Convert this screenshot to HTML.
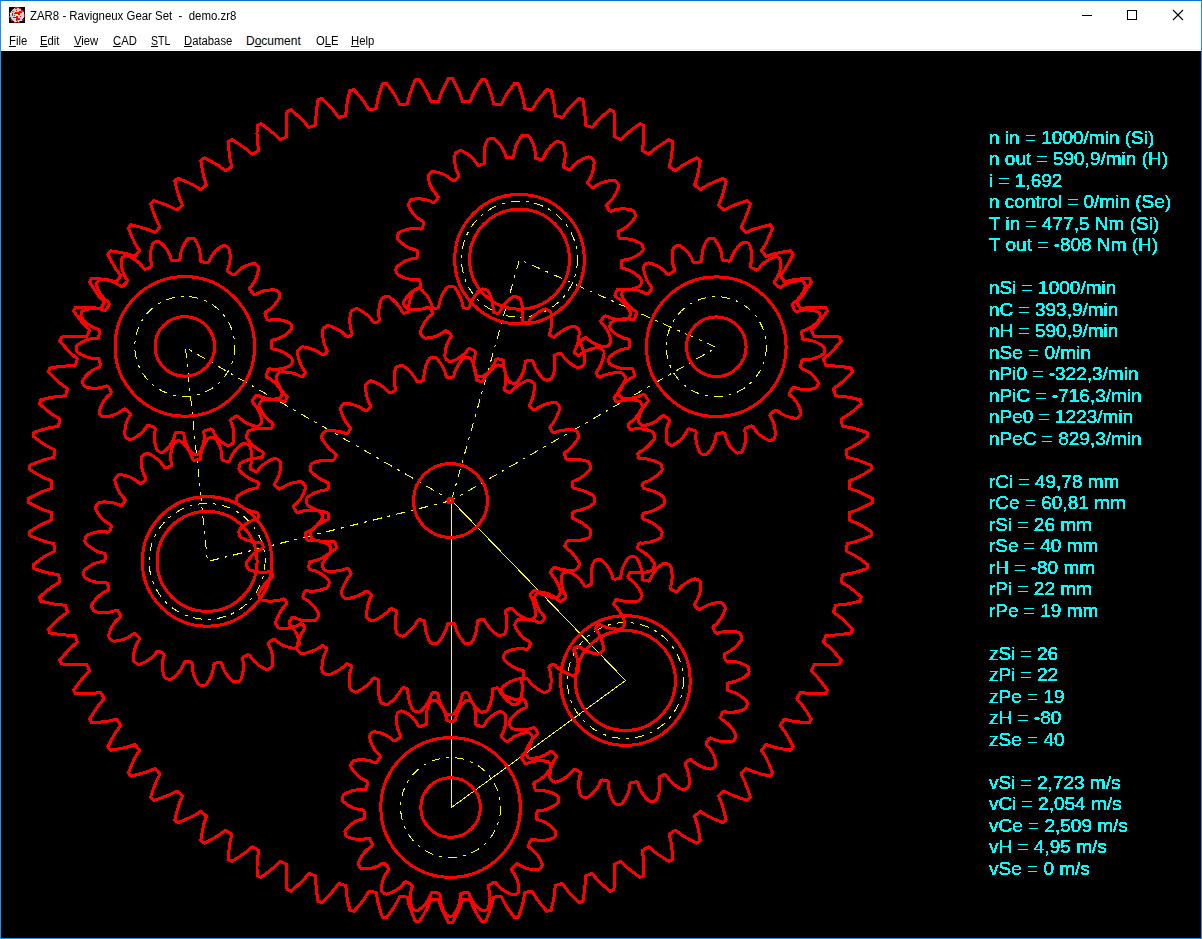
<!DOCTYPE html>
<html><head><meta charset="utf-8">
<style>
html,body{margin:0;padding:0;width:1202px;height:939px;overflow:hidden;background:#fff;}
body{position:relative;font-family:"Liberation Sans",sans-serif;}
#frame{position:absolute;left:0;top:0;width:1200px;height:937px;border:1px solid #1e90ee;border-top-color:#0474d2;}
#title{position:absolute;left:1px;top:1px;width:1200px;height:30px;background:#fff;}
#icon{position:absolute;left:8px;top:6px;width:16px;height:16px;background:#000;}
#ttext{position:absolute;left:29px;top:7px;font-size:12px;color:#000;white-space:pre;line-height:16px;transform:scaleX(0.952);transform-origin:0 0;}
#ctrl{position:absolute;left:0;top:0;}
#menu{position:absolute;left:1px;top:31px;width:1200px;height:18px;background:#fff;}
#menuline{position:absolute;left:1px;top:49px;width:1200px;height:1px;background:#f0f0f0;}
.mi{position:absolute;top:3px;font-size:12px;line-height:14px;color:#000;white-space:pre;transform:scaleX(0.94);transform-origin:0 0;}
.mi u{text-decoration:underline;}
#canvas{position:absolute;left:1px;top:51px;width:1200px;height:887px;background:#000;overflow:hidden;}
#canvas>svg{position:absolute;left:-1px;top:-51px;shape-rendering:crispEdges;}
.g{fill:none;stroke:#f00;stroke-width:3;stroke-linejoin:round;}
.c{fill:none;stroke:#f00;stroke-width:3;}
.y{fill:none;stroke:#ff0;stroke-width:1;}
.dd{stroke-dasharray:9 6 3 6;}
.dl{stroke-dasharray:7 4;}
#txt{position:absolute;left:0;top:0;width:1200px;height:887px;filter:url(#crisp);}
.t{position:absolute;left:988px;font-size:19px;line-height:22px;color:#0ff;white-space:pre;-webkit-text-stroke:0.12px #0ff;}
</style></head><body>
<svg width="0" height="0" style="position:absolute"><filter id="crisp" x="0" y="0" width="100%" height="100%"><feComponentTransfer><feFuncA type="discrete" tableValues="0 1 1"/></feComponentTransfer></filter></svg>
<div id="frame"></div>
<div id="title">
  <div id="icon"><svg width="16" height="16" style="position:absolute;left:0;top:0" shape-rendering="crispEdges">
<rect width="16" height="16" fill="#000"/>
<circle cx="8" cy="8.2" r="7.3" fill="#c4d8d8"/>
<circle cx="8" cy="8.2" r="7.3" fill="none" stroke="#f00" stroke-width="1.2" stroke-dasharray="2 2"/>
<path fill="#f00" d="M8 0h2v1H8zM12 3h2v2h-2zM10 4h3v2h-3zM9 5h2v3H9zM8 5h1v3H8zM6 5h2v2H6zM3 6h1v3H3zM5 8h1v1H5zM7 9h2v5H7zM5 10h2v1H5zM11 9h1v1h-1zM4 10h1v1H4zM9 12h2v1H9zM3 4h2v1H3zM7 3h1v1H7z"/>
<rect x="7" y="7" width="2" height="2" fill="#ff0"/>
<rect x="9" y="6" width="1" height="1" fill="#00f"/>
<rect x="3" y="4" width="2" height="1" fill="#0c0"/>
<rect x="12" y="4" width="2" height="1" fill="#0c0"/>
<rect x="8" y="13" width="1" height="2" fill="#0c0"/>
<rect x="9" y="11" width="2" height="1" fill="#f0f"/>
<rect x="5" y="6" width="1" height="1" fill="#808"/>
<rect x="1" y="6" width="1" height="1" fill="#fff"/>
</svg></div>
  <div id="ttext">ZAR8 - Ravigneux Gear Set  -  demo.zr8</div>
</div>
<svg id="ctrl" width="1202" height="31"><path d="M1082 15.5H1092" stroke="#000" stroke-width="1"/><rect x="1127.5" y="10.5" width="9" height="9" fill="none" stroke="#000" stroke-width="1"/><path d="M1173 10L1183 20M1183 10L1173 20" stroke="#000" stroke-width="1.1"/></svg>
<div id="menu">
  <div class="mi" style="left:8px"><u>F</u>ile</div>
  <div class="mi" style="left:39px"><u>E</u>dit</div>
  <div class="mi" style="left:73px"><u>V</u>iew</div>
  <div class="mi" style="left:112px"><u>C</u>AD</div>
  <div class="mi" style="left:150px;transform:scaleX(0.88)"><u>S</u>TL</div>
  <div class="mi" style="left:183px"><u>D</u>atabase</div>
  <div class="mi" style="left:245px;transform:scaleX(1.0)">D<u>o</u>cument</div>
  <div class="mi" style="left:315px">O<u>L</u>E</div>
  <div class="mi" style="left:350px"><u>H</u>elp</div>
</div>
<div id="menuline"></div>
<div id="canvas">
<svg width="1202" height="939" viewBox="0 0 1202 939">
<circle cx="519.50" cy="259.20" r="58.00" class="y dd"/>
<circle cx="625.40" cy="680.50" r="58.00" class="y dd"/>
<circle cx="207.10" cy="561.40" r="58.00" class="y dd"/>
<circle cx="716.30" cy="346.70" r="50.00" class="y dd"/>
<circle cx="450.60" cy="807.50" r="50.00" class="y dd"/>
<circle cx="184.80" cy="346.40" r="50.00" class="y dd"/>
<path class="y dd" d="M451.5 500.5 L519.5 259.5 L716.5 347.5 Z"/>
<path class="y" d="M451.5 500.5 L625.5 680.5 L451.5 807.5 Z"/>
<path class="y dd" d="M451.5 500.5 L207.5 561.5 L185.5 347.5 Z"/>
<path class="g" d="M849.2 484.8 L849.3 488.5 L857.1 491.0 L864.8 494.5 L872.5 498.4 L872.5 502.6 L864.8 506.5 L857.1 510.0 L849.3 512.5 L849.2 516.2 L849.0 519.9 L856.5 523.0 L864.0 527.0 L871.4 531.6 L871.0 535.7 L863.0 539.0 L855.1 541.8 L847.2 543.7 L846.7 547.4 L846.3 551.1 L853.5 554.7 L860.6 559.3 L867.6 564.5 L867.0 568.6 L858.7 571.3 L850.6 573.5 L842.5 574.7 L841.8 578.3 L841.1 582.0 L848.0 586.2 L854.8 591.3 L861.3 597.0 L860.4 601.0 L851.9 603.1 L843.6 604.6 L835.5 605.2 L834.5 608.8 L833.5 612.4 L840.1 617.1 L846.4 622.8 L852.5 628.9 L851.2 632.9 L842.6 634.3 L834.2 635.1 L826.1 635.1 L824.8 638.6 L823.5 642.1 L829.7 647.3 L835.6 653.5 L841.2 660.1 L839.6 663.9 L830.9 664.6 L822.5 664.8 L814.4 664.2 L812.8 667.5 L811.3 670.9 L817.0 676.6 L822.4 683.2 L827.4 690.2 L825.6 693.9 L816.9 694.0 L808.4 693.5 L800.4 692.2 L798.6 695.5 L796.8 698.7 L802.1 704.8 L806.9 711.8 L811.4 719.2 L809.2 722.8 L800.6 722.1 L792.2 721.0 L784.3 719.1 L782.3 722.2 L780.2 725.2 L785.0 731.8 L789.2 739.1 L793.1 746.9 L790.7 750.2 L782.1 748.9 L773.8 747.1 L766.1 744.6 L763.8 747.5 L761.5 750.4 L765.8 757.3 L769.4 765.0 L772.7 773.0 L770.0 776.1 L761.6 774.1 L753.5 771.7 L746.0 768.6 L743.5 771.3 L741.0 774.0 L744.7 781.3 L747.7 789.2 L750.4 797.4 L747.4 800.4 L739.2 797.7 L731.3 794.7 L724.0 791.0 L721.3 793.5 L718.6 796.0 L721.7 803.5 L724.1 811.6 L726.1 820.0 L723.0 822.7 L715.0 819.4 L707.3 815.8 L700.4 811.5 L697.5 813.8 L694.6 816.1 L697.1 823.8 L698.9 832.1 L700.2 840.7 L696.9 843.1 L689.1 839.2 L681.8 835.0 L675.2 830.2 L672.2 832.3 L669.1 834.3 L671.0 842.2 L672.1 850.6 L672.8 859.2 L669.2 861.4 L661.8 856.9 L654.8 852.1 L648.7 846.8 L645.5 848.6 L642.2 850.4 L643.5 858.4 L644.0 866.9 L643.9 875.6 L640.2 877.4 L633.2 872.4 L626.6 867.0 L620.9 861.3 L617.5 862.8 L614.2 864.4 L614.8 872.5 L614.6 880.9 L613.9 889.6 L610.1 891.2 L603.5 885.6 L597.3 879.7 L592.1 873.5 L588.6 874.8 L585.1 876.1 L585.1 884.2 L584.3 892.6 L582.9 901.2 L578.9 902.5 L572.8 896.4 L567.1 890.1 L562.4 883.5 L558.8 884.5 L555.2 885.5 L554.6 893.6 L553.1 901.9 L551.0 910.4 L547.0 911.3 L541.3 904.8 L536.2 898.0 L532.0 891.1 L528.3 891.8 L524.7 892.5 L523.5 900.6 L521.3 908.7 L518.6 917.0 L514.5 917.6 L509.3 910.6 L504.7 903.5 L501.1 896.3 L497.4 896.7 L493.7 897.2 L491.8 905.1 L489.0 913.0 L485.7 921.0 L481.6 921.4 L477.0 914.0 L473.0 906.5 L469.9 899.0 L466.2 899.2 L462.5 899.3 L460.0 907.1 L456.5 914.8 L452.6 922.5 L448.4 922.5 L444.5 914.8 L441.0 907.1 L438.5 899.3 L434.8 899.2 L431.1 899.0 L428.0 906.5 L424.0 914.0 L419.4 921.4 L415.3 921.0 L412.0 913.0 L409.2 905.1 L407.3 897.2 L403.6 896.7 L399.9 896.3 L396.3 903.5 L391.7 910.6 L386.5 917.6 L382.4 917.0 L379.7 908.7 L377.5 900.6 L376.3 892.5 L372.7 891.8 L369.0 891.1 L364.8 898.0 L359.7 904.8 L354.0 911.3 L350.0 910.4 L347.9 901.9 L346.4 893.6 L345.8 885.5 L342.2 884.5 L338.6 883.5 L333.9 890.1 L328.2 896.4 L322.1 902.5 L318.1 901.2 L316.7 892.6 L315.9 884.2 L315.9 876.1 L312.4 874.8 L308.9 873.5 L303.7 879.7 L297.5 885.6 L290.9 891.2 L287.1 889.6 L286.4 880.9 L286.2 872.5 L286.8 864.4 L283.5 862.8 L280.1 861.3 L274.4 867.0 L267.8 872.4 L260.8 877.4 L257.1 875.6 L257.0 866.9 L257.5 858.4 L258.8 850.4 L255.5 848.6 L252.3 846.8 L246.2 852.1 L239.2 856.9 L231.8 861.4 L228.2 859.2 L228.9 850.6 L230.0 842.2 L231.9 834.3 L228.8 832.3 L225.8 830.2 L219.2 835.0 L211.9 839.2 L204.1 843.1 L200.8 840.7 L202.1 832.1 L203.9 823.8 L206.4 816.1 L203.5 813.8 L200.6 811.5 L193.7 815.8 L186.0 819.4 L178.0 822.7 L174.9 820.0 L176.9 811.6 L179.3 803.5 L182.4 796.0 L179.7 793.5 L177.0 791.0 L169.7 794.7 L161.8 797.7 L153.6 800.4 L150.6 797.4 L153.3 789.2 L156.3 781.3 L160.0 774.0 L157.5 771.3 L155.0 768.6 L147.5 771.7 L139.4 774.1 L131.0 776.1 L128.3 773.0 L131.6 765.0 L135.2 757.3 L139.5 750.4 L137.2 747.5 L134.9 744.6 L127.2 747.1 L118.9 748.9 L110.3 750.2 L107.9 746.9 L111.8 739.1 L116.0 731.8 L120.8 725.2 L118.7 722.2 L116.7 719.1 L108.8 721.0 L100.4 722.1 L91.8 722.8 L89.6 719.2 L94.1 711.8 L98.9 704.8 L104.2 698.7 L102.4 695.5 L100.6 692.2 L92.6 693.5 L84.1 694.0 L75.4 693.9 L73.6 690.2 L78.6 683.2 L84.0 676.6 L89.7 670.9 L88.2 667.5 L86.6 664.2 L78.5 664.8 L70.1 664.6 L61.4 663.9 L59.8 660.1 L65.4 653.5 L71.3 647.3 L77.5 642.1 L76.2 638.6 L74.9 635.1 L66.8 635.1 L58.4 634.3 L49.8 632.9 L48.5 628.9 L54.6 622.8 L60.9 617.1 L67.5 612.4 L66.5 608.8 L65.5 605.2 L57.4 604.6 L49.1 603.1 L40.6 601.0 L39.7 597.0 L46.2 591.3 L53.0 586.2 L59.9 582.0 L59.2 578.3 L58.5 574.7 L50.4 573.5 L42.3 571.3 L34.0 568.6 L33.4 564.5 L40.4 559.3 L47.5 554.7 L54.7 551.1 L54.3 547.4 L53.8 543.7 L45.9 541.8 L38.0 539.0 L30.0 535.7 L29.6 531.6 L37.0 527.0 L44.5 523.0 L52.0 519.9 L51.8 516.2 L51.7 512.5 L43.9 510.0 L36.2 506.5 L28.5 502.6 L28.5 498.4 L36.2 494.5 L43.9 491.0 L51.7 488.5 L51.8 484.8 L52.0 481.1 L44.5 478.0 L37.0 474.0 L29.6 469.4 L30.0 465.3 L38.0 462.0 L45.9 459.2 L53.8 457.3 L54.3 453.6 L54.7 449.9 L47.5 446.3 L40.4 441.7 L33.4 436.5 L34.0 432.4 L42.3 429.7 L50.4 427.5 L58.5 426.3 L59.2 422.7 L59.9 419.0 L53.0 414.8 L46.2 409.7 L39.7 404.0 L40.6 400.0 L49.1 397.9 L57.4 396.4 L65.5 395.8 L66.5 392.2 L67.5 388.6 L60.9 383.9 L54.6 378.2 L48.5 372.1 L49.8 368.1 L58.4 366.7 L66.8 365.9 L74.9 365.9 L76.2 362.4 L77.5 358.9 L71.3 353.7 L65.4 347.5 L59.8 340.9 L61.4 337.1 L70.1 336.4 L78.5 336.2 L86.6 336.8 L88.2 333.5 L89.7 330.1 L84.0 324.4 L78.6 317.8 L73.6 310.8 L75.4 307.1 L84.1 307.0 L92.6 307.5 L100.6 308.8 L102.4 305.5 L104.2 302.3 L98.9 296.2 L94.1 289.2 L89.6 281.8 L91.8 278.2 L100.4 278.9 L108.8 280.0 L116.7 281.9 L118.7 278.8 L120.8 275.8 L116.0 269.2 L111.8 261.9 L107.9 254.1 L110.3 250.8 L118.9 252.1 L127.2 253.9 L134.9 256.4 L137.2 253.5 L139.5 250.6 L135.2 243.7 L131.6 236.0 L128.3 228.0 L131.0 224.9 L139.4 226.9 L147.5 229.3 L155.0 232.4 L157.5 229.7 L160.0 227.0 L156.3 219.7 L153.3 211.8 L150.6 203.6 L153.6 200.6 L161.8 203.3 L169.7 206.3 L177.0 210.0 L179.7 207.5 L182.4 205.0 L179.3 197.5 L176.9 189.4 L174.9 181.0 L178.0 178.3 L186.0 181.6 L193.7 185.2 L200.6 189.5 L203.5 187.2 L206.4 184.9 L203.9 177.2 L202.1 168.9 L200.8 160.3 L204.1 157.9 L211.9 161.8 L219.2 166.0 L225.8 170.8 L228.8 168.7 L231.9 166.7 L230.0 158.8 L228.9 150.4 L228.2 141.8 L231.8 139.6 L239.2 144.1 L246.2 148.9 L252.3 154.2 L255.5 152.4 L258.8 150.6 L257.5 142.6 L257.0 134.1 L257.1 125.4 L260.8 123.6 L267.8 128.6 L274.4 134.0 L280.1 139.7 L283.5 138.2 L286.8 136.6 L286.2 128.5 L286.4 120.1 L287.1 111.4 L290.9 109.8 L297.5 115.4 L303.7 121.3 L308.9 127.5 L312.4 126.2 L315.9 124.9 L315.9 116.8 L316.7 108.4 L318.1 99.8 L322.1 98.5 L328.2 104.6 L333.9 110.9 L338.6 117.5 L342.2 116.5 L345.8 115.5 L346.4 107.4 L347.9 99.1 L350.0 90.6 L354.0 89.7 L359.7 96.2 L364.8 103.0 L369.0 109.9 L372.7 109.2 L376.3 108.5 L377.5 100.4 L379.7 92.3 L382.4 84.0 L386.5 83.4 L391.7 90.4 L396.3 97.5 L399.9 104.7 L403.6 104.3 L407.3 103.8 L409.2 95.9 L412.0 88.0 L415.3 80.0 L419.4 79.6 L424.0 87.0 L428.0 94.5 L431.1 102.0 L434.8 101.8 L438.5 101.7 L441.0 93.9 L444.5 86.2 L448.4 78.5 L452.6 78.5 L456.5 86.2 L460.0 93.9 L462.5 101.7 L466.2 101.8 L469.9 102.0 L473.0 94.5 L477.0 87.0 L481.6 79.6 L485.7 80.0 L489.0 88.0 L491.8 95.9 L493.7 103.8 L497.4 104.3 L501.1 104.7 L504.7 97.5 L509.3 90.4 L514.5 83.4 L518.6 84.0 L521.3 92.3 L523.5 100.4 L524.7 108.5 L528.3 109.2 L532.0 109.9 L536.2 103.0 L541.3 96.2 L547.0 89.7 L551.0 90.6 L553.1 99.1 L554.6 107.4 L555.2 115.5 L558.8 116.5 L562.4 117.5 L567.1 110.9 L572.8 104.6 L578.9 98.5 L582.9 99.8 L584.3 108.4 L585.1 116.8 L585.1 124.9 L588.6 126.2 L592.1 127.5 L597.3 121.3 L603.5 115.4 L610.1 109.8 L613.9 111.4 L614.6 120.1 L614.8 128.5 L614.2 136.6 L617.5 138.2 L620.9 139.7 L626.6 134.0 L633.2 128.6 L640.2 123.6 L643.9 125.4 L644.0 134.1 L643.5 142.6 L642.2 150.6 L645.5 152.4 L648.7 154.2 L654.8 148.9 L661.8 144.1 L669.2 139.6 L672.8 141.8 L672.1 150.4 L671.0 158.8 L669.1 166.7 L672.2 168.7 L675.2 170.8 L681.8 166.0 L689.1 161.8 L696.9 157.9 L700.2 160.3 L698.9 168.9 L697.1 177.2 L694.6 184.9 L697.5 187.2 L700.4 189.5 L707.3 185.2 L715.0 181.6 L723.0 178.3 L726.1 181.0 L724.1 189.4 L721.7 197.5 L718.6 205.0 L721.3 207.5 L724.0 210.0 L731.3 206.3 L739.2 203.3 L747.4 200.6 L750.4 203.6 L747.7 211.8 L744.7 219.7 L741.0 227.0 L743.5 229.7 L746.0 232.4 L753.5 229.3 L761.6 226.9 L770.0 224.9 L772.7 228.0 L769.4 236.0 L765.8 243.7 L761.5 250.6 L763.8 253.5 L766.1 256.4 L773.8 253.9 L782.1 252.1 L790.7 250.8 L793.1 254.1 L789.2 261.9 L785.0 269.2 L780.2 275.8 L782.3 278.8 L784.3 281.9 L792.2 280.0 L800.6 278.9 L809.2 278.2 L811.4 281.8 L806.9 289.2 L802.1 296.2 L796.8 302.3 L798.6 305.5 L800.4 308.8 L808.4 307.5 L816.9 307.0 L825.6 307.1 L827.4 310.8 L822.4 317.8 L817.0 324.4 L811.3 330.1 L812.8 333.5 L814.4 336.8 L822.5 336.2 L830.9 336.4 L839.6 337.1 L841.2 340.9 L835.6 347.5 L829.7 353.7 L823.5 358.9 L824.8 362.4 L826.1 365.9 L834.2 365.9 L842.6 366.7 L851.2 368.1 L852.5 372.1 L846.4 378.2 L840.1 383.9 L833.5 388.6 L834.5 392.2 L835.5 395.8 L843.6 396.4 L851.9 397.9 L860.4 400.0 L861.3 404.0 L854.8 409.7 L848.0 414.8 L841.1 419.0 L841.8 422.7 L842.5 426.3 L850.6 427.5 L858.7 429.7 L867.0 432.4 L867.6 436.5 L860.6 441.7 L853.5 446.3 L846.3 449.9 L846.7 453.6 L847.2 457.3 L855.1 459.2 L863.0 462.0 L871.0 465.3 L871.4 469.4 L864.0 474.0 L856.5 478.0 L849.0 481.1 Z"/>
<path class="g" d="M642.8 484.2Q642.9 485.7 643.0 487.2Q643.1 488.7 645.3 488.9Q647.4 489.2 649.5 489.8Q651.6 490.4 653.8 491.3Q655.9 492.2 658.1 493.4Q660.2 494.6 662.3 496.1Q664.5 497.5 664.5 499.2Q664.5 500.9 664.5 502.6Q664.5 504.2 662.3 505.7Q660.2 507.1 658.0 508.3Q655.9 509.5 653.8 510.4Q651.6 511.3 649.5 511.9Q647.3 512.5 645.2 512.7Q643.1 513.0 643.0 514.5Q642.9 516.0 642.7 517.5Q642.6 519.0 644.7 519.6Q646.7 520.1 648.7 521.0Q650.8 522.0 652.7 523.2Q654.7 524.5 656.6 526.0Q658.6 527.5 660.4 529.3Q662.3 531.0 662.1 532.7Q661.8 534.3 661.5 536.0Q661.2 537.7 658.9 538.8Q656.6 539.9 654.3 540.7Q652.0 541.5 649.7 542.1Q647.4 542.6 645.2 542.9Q643.0 543.2 640.9 543.0Q638.8 542.9 638.4 544.4Q638.1 545.9 637.7 547.4Q637.4 548.8 639.3 549.7Q641.2 550.6 643.1 551.8Q644.9 553.0 646.7 554.6Q648.4 556.1 650.1 557.9Q651.8 559.7 653.4 561.7Q654.9 563.8 654.4 565.4Q653.9 567.0 653.4 568.6Q652.8 570.2 650.4 570.9Q647.9 571.6 645.5 572.1Q643.1 572.5 640.7 572.7Q638.4 572.9 636.2 572.8Q634.0 572.8 631.9 572.3Q629.8 571.9 629.3 573.3Q628.7 574.7 628.1 576.1Q627.5 577.5 629.3 578.6Q631.1 579.8 632.7 581.3Q634.3 582.8 635.8 584.6Q637.3 586.4 638.7 588.4Q640.0 590.5 641.3 592.7Q642.5 595.0 641.8 596.5Q641.0 598.0 640.2 599.5Q639.5 601.0 636.9 601.3Q634.3 601.6 631.9 601.7Q629.4 601.8 627.1 601.6Q624.8 601.4 622.6 601.0Q620.4 600.6 618.4 599.8Q616.5 599.0 615.7 600.3Q614.9 601.6 614.1 602.9Q613.3 604.2 614.9 605.6Q616.4 607.1 617.8 608.8Q619.2 610.6 620.4 612.6Q621.6 614.6 622.6 616.8Q623.6 619.0 624.5 621.4Q625.4 623.9 624.4 625.2Q623.4 626.6 622.4 627.9Q621.4 629.3 618.8 629.2Q616.3 629.1 613.8 628.8Q611.4 628.5 609.1 628.0Q606.8 627.5 604.8 626.7Q602.7 625.9 600.8 624.9Q599.0 623.8 598.0 624.9Q597.0 626.1 596.0 627.2Q595.0 628.4 596.4 630.0Q597.7 631.7 598.8 633.6Q599.9 635.6 600.7 637.7Q601.6 639.9 602.3 642.3Q603.0 644.6 603.4 647.2Q603.9 649.7 602.7 650.9Q601.6 652.1 600.4 653.3Q599.2 654.4 596.6 654.0Q594.1 653.5 591.7 652.8Q589.4 652.1 587.2 651.2Q585.1 650.3 583.1 649.3Q581.2 648.2 579.5 646.8Q577.9 645.5 576.7 646.5Q575.6 647.5 574.4 648.5Q573.3 649.4 574.3 651.3Q575.4 653.1 576.1 655.2Q576.9 657.3 577.4 659.6Q577.9 661.8 578.2 664.3Q578.5 666.7 578.6 669.3Q578.7 671.9 577.3 672.9Q576.0 673.8 574.6 674.8Q573.2 675.8 570.8 674.9Q568.4 674.0 566.2 673.0Q564.0 672.0 562.0 670.8Q560.0 669.6 558.2 668.2Q556.5 666.8 555.1 665.2Q553.6 663.6 552.3 664.4Q551.1 665.2 549.8 666.0Q548.5 666.8 549.2 668.8Q550.0 670.8 550.4 673.0Q550.8 675.1 551.0 677.5Q551.1 679.8 551.1 682.2Q551.0 684.7 550.6 687.2Q550.3 689.8 548.8 690.6Q547.3 691.3 545.8 692.1Q544.3 692.8 542.1 691.6Q539.8 690.3 537.8 689.0Q535.7 687.6 534.0 686.1Q532.2 684.6 530.7 683.0Q529.2 681.3 528.0 679.5Q526.8 677.8 525.4 678.3Q524.0 678.9 522.6 679.5Q521.2 680.1 521.7 682.2Q522.1 684.2 522.2 686.5Q522.3 688.7 522.1 691.0Q521.9 693.3 521.4 695.7Q520.9 698.1 520.2 700.6Q519.5 703.1 517.9 703.6Q516.3 704.1 514.7 704.6Q513.1 705.1 511.0 703.6Q509.0 702.0 507.2 700.3Q505.4 698.6 503.9 696.9Q502.4 695.1 501.1 693.3Q499.9 691.4 499.0 689.5Q498.2 687.5 496.7 687.9Q495.2 688.2 493.8 688.6Q492.3 688.9 492.4 691.1Q492.5 693.2 492.2 695.4Q491.9 697.6 491.4 699.8Q490.8 702.1 490.0 704.4Q489.1 706.7 488.0 709.0Q486.9 711.4 485.3 711.7Q483.6 711.9 481.9 712.2Q480.3 712.4 478.5 710.5Q476.8 708.7 475.3 706.7Q473.7 704.8 472.5 702.8Q471.3 700.8 470.4 698.8Q469.4 696.8 468.9 694.7Q468.3 692.7 466.8 692.8Q465.3 692.9 463.8 693.0Q462.3 693.1 462.1 695.3Q461.8 697.4 461.2 699.5Q460.6 701.6 459.7 703.8Q458.8 705.9 457.6 708.1Q456.4 710.2 454.9 712.3Q453.5 714.5 451.8 714.5Q450.1 714.5 448.4 714.5Q446.8 714.5 445.3 712.3Q443.9 710.2 442.7 708.0Q441.5 705.9 440.6 703.8Q439.7 701.6 439.1 699.5Q438.5 697.3 438.3 695.2Q438.0 693.1 436.5 693.0Q435.0 692.9 433.5 692.7Q432.0 692.6 431.4 694.7Q430.9 696.7 430.0 698.7Q429.0 700.8 427.8 702.7Q426.5 704.7 425.0 706.6Q423.5 708.6 421.7 710.4Q420.0 712.3 418.3 712.1Q416.7 711.8 415.0 711.5Q413.3 711.2 412.2 708.9Q411.1 706.6 410.3 704.3Q409.5 702.0 408.9 699.7Q408.4 697.4 408.1 695.2Q407.8 693.0 408.0 690.9Q408.1 688.8 406.6 688.4Q405.1 688.1 403.6 687.7Q402.2 687.4 401.3 689.3Q400.4 691.2 399.2 693.1Q398.0 694.9 396.4 696.7Q394.9 698.4 393.1 700.1Q391.3 701.8 389.3 703.4Q387.2 704.9 385.6 704.4Q384.0 703.9 382.4 703.4Q380.8 702.8 380.1 700.4Q379.4 697.9 378.9 695.5Q378.5 693.1 378.3 690.7Q378.1 688.4 378.2 686.2Q378.2 684.0 378.7 681.9Q379.1 679.8 377.7 679.3Q376.3 678.7 374.9 678.1Q373.5 677.5 372.4 679.3Q371.2 681.1 369.7 682.7Q368.2 684.3 366.4 685.8Q364.6 687.3 362.6 688.7Q360.5 690.0 358.3 691.3Q356.0 692.5 354.5 691.8Q353.0 691.0 351.5 690.2Q350.0 689.5 349.7 686.9Q349.4 684.3 349.3 681.9Q349.2 679.4 349.4 677.1Q349.6 674.8 350.0 672.6Q350.4 670.4 351.2 668.4Q352.0 666.5 350.7 665.7Q349.4 664.9 348.1 664.1Q346.8 663.3 345.4 664.9Q343.9 666.4 342.2 667.8Q340.4 669.2 338.4 670.4Q336.4 671.6 334.2 672.6Q332.0 673.6 329.6 674.5Q327.1 675.4 325.8 674.4Q324.4 673.4 323.1 672.4Q321.7 671.4 321.8 668.8Q321.9 666.3 322.2 663.8Q322.5 661.4 323.0 659.1Q323.5 656.8 324.3 654.8Q325.1 652.7 326.1 650.8Q327.2 649.0 326.1 648.0Q324.9 647.0 323.8 646.0Q322.6 645.0 321.0 646.4Q319.3 647.7 317.4 648.8Q315.4 649.9 313.3 650.7Q311.1 651.6 308.7 652.3Q306.4 653.0 303.8 653.4Q301.3 653.9 300.1 652.7Q298.9 651.6 297.7 650.4Q296.6 649.2 297.0 646.6Q297.5 644.1 298.2 641.7Q298.9 639.4 299.8 637.2Q300.7 635.1 301.7 633.1Q302.8 631.2 304.2 629.5Q305.5 627.9 304.5 626.7Q303.5 625.6 302.5 624.4Q301.6 623.3 299.7 624.3Q297.9 625.4 295.8 626.1Q293.7 626.9 291.4 627.4Q289.2 627.9 286.7 628.2Q284.3 628.5 281.7 628.6Q279.1 628.7 278.1 627.3Q277.2 626.0 276.2 624.6Q275.2 623.2 276.1 620.8Q277.0 618.4 278.0 616.2Q279.0 614.0 280.2 612.0Q281.4 610.0 282.8 608.2Q284.2 606.5 285.8 605.1Q287.4 603.6 286.6 602.3Q285.8 601.1 285.0 599.8Q284.2 598.5 282.2 599.2Q280.2 600.0 278.0 600.4Q275.9 600.8 273.5 601.0Q271.2 601.1 268.8 601.1Q266.3 601.0 263.8 600.6Q261.2 600.3 260.4 598.8Q259.7 597.3 258.9 595.8Q258.2 594.3 259.4 592.1Q260.7 589.8 262.0 587.8Q263.4 585.7 264.9 584.0Q266.4 582.2 268.0 580.7Q269.7 579.2 271.5 578.0Q273.2 576.8 272.7 575.4Q272.1 574.0 271.5 572.6Q270.9 571.2 268.8 571.7Q266.8 572.1 264.5 572.2Q262.3 572.3 260.0 572.1Q257.7 571.9 255.3 571.4Q252.9 570.9 250.4 570.2Q247.9 569.5 247.4 567.9Q246.9 566.3 246.4 564.7Q245.9 563.1 247.4 561.0Q249.0 559.0 250.7 557.2Q252.4 555.4 254.1 553.9Q255.9 552.4 257.7 551.1Q259.6 549.9 261.5 549.0Q263.5 548.2 263.1 546.7Q262.8 545.2 262.4 543.8Q262.1 542.3 259.9 542.4Q257.8 542.5 255.6 542.2Q253.4 541.9 251.2 541.4Q248.9 540.8 246.6 540.0Q244.3 539.1 242.0 538.0Q239.6 536.9 239.3 535.3Q239.1 533.6 238.8 531.9Q238.6 530.3 240.5 528.5Q242.3 526.8 244.3 525.3Q246.2 523.7 248.2 522.5Q250.2 521.3 252.2 520.4Q254.2 519.4 256.3 518.9Q258.3 518.3 258.2 516.8Q258.1 515.3 258.0 513.8Q257.9 512.3 255.7 512.1Q253.6 511.8 251.5 511.2Q249.4 510.6 247.2 509.7Q245.1 508.8 242.9 507.6Q240.8 506.4 238.7 504.9Q236.5 503.5 236.5 501.8Q236.5 500.1 236.5 498.4Q236.5 496.8 238.7 495.3Q240.8 493.9 243.0 492.7Q245.1 491.5 247.2 490.6Q249.4 489.7 251.5 489.1Q253.7 488.5 255.8 488.3Q257.9 488.0 258.0 486.5Q258.1 485.0 258.3 483.5Q258.4 482.0 256.3 481.4Q254.3 480.9 252.3 480.0Q250.2 479.0 248.3 477.8Q246.3 476.5 244.4 475.0Q242.4 473.5 240.6 471.7Q238.7 470.0 238.9 468.3Q239.2 466.7 239.5 465.0Q239.8 463.3 242.1 462.2Q244.4 461.1 246.7 460.3Q249.0 459.5 251.3 458.9Q253.6 458.4 255.8 458.1Q258.0 457.8 260.1 458.0Q262.2 458.1 262.6 456.6Q262.9 455.1 263.3 453.6Q263.6 452.2 261.7 451.3Q259.8 450.4 257.9 449.2Q256.1 448.0 254.3 446.4Q252.6 444.9 250.9 443.1Q249.2 441.3 247.6 439.3Q246.1 437.2 246.6 435.6Q247.1 434.0 247.6 432.4Q248.2 430.8 250.6 430.1Q253.1 429.4 255.5 428.9Q257.9 428.5 260.3 428.3Q262.6 428.1 264.8 428.2Q267.0 428.2 269.1 428.7Q271.2 429.1 271.7 427.7Q272.3 426.3 272.9 424.9Q273.5 423.5 271.7 422.4Q269.9 421.2 268.3 419.7Q266.7 418.2 265.2 416.4Q263.7 414.6 262.3 412.6Q261.0 410.5 259.7 408.3Q258.5 406.0 259.2 404.5Q260.0 403.0 260.8 401.5Q261.5 400.0 264.1 399.7Q266.7 399.4 269.1 399.3Q271.6 399.2 273.9 399.4Q276.2 399.6 278.4 400.0Q280.6 400.4 282.6 401.2Q284.5 402.0 285.3 400.7Q286.1 399.4 286.9 398.1Q287.7 396.8 286.1 395.4Q284.6 393.9 283.2 392.2Q281.8 390.4 280.6 388.4Q279.4 386.4 278.4 384.2Q277.4 382.0 276.5 379.6Q275.6 377.1 276.6 375.8Q277.6 374.4 278.6 373.1Q279.6 371.7 282.2 371.8Q284.7 371.9 287.2 372.2Q289.6 372.5 291.9 373.0Q294.2 373.5 296.2 374.3Q298.3 375.1 300.2 376.1Q302.0 377.2 303.0 376.1Q304.0 374.9 305.0 373.8Q306.0 372.6 304.6 371.0Q303.3 369.3 302.2 367.4Q301.1 365.4 300.3 363.3Q299.4 361.1 298.7 358.7Q298.0 356.4 297.6 353.8Q297.1 351.3 298.3 350.1Q299.4 348.9 300.6 347.7Q301.8 346.6 304.4 347.0Q306.9 347.5 309.3 348.2Q311.6 348.9 313.8 349.8Q315.9 350.7 317.9 351.7Q319.8 352.8 321.5 354.2Q323.1 355.5 324.3 354.5Q325.4 353.5 326.6 352.5Q327.7 351.6 326.7 349.7Q325.6 347.9 324.9 345.8Q324.1 343.7 323.6 341.4Q323.1 339.2 322.8 336.7Q322.5 334.3 322.4 331.7Q322.3 329.1 323.7 328.1Q325.0 327.2 326.4 326.2Q327.8 325.2 330.2 326.1Q332.6 327.0 334.8 328.0Q337.0 329.0 339.0 330.2Q341.0 331.4 342.8 332.8Q344.5 334.2 345.9 335.8Q347.4 337.4 348.7 336.6Q349.9 335.8 351.2 335.0Q352.5 334.2 351.8 332.2Q351.0 330.2 350.6 328.0Q350.2 325.9 350.0 323.5Q349.9 321.2 349.9 318.8Q350.0 316.3 350.4 313.8Q350.7 311.2 352.2 310.4Q353.7 309.7 355.2 308.9Q356.7 308.2 358.9 309.4Q361.2 310.7 363.2 312.0Q365.3 313.4 367.0 314.9Q368.8 316.4 370.3 318.0Q371.8 319.7 373.0 321.5Q374.2 323.2 375.6 322.7Q377.0 322.1 378.4 321.5Q379.8 320.9 379.3 318.8Q378.9 316.8 378.8 314.5Q378.7 312.3 378.9 310.0Q379.1 307.7 379.6 305.3Q380.1 302.9 380.8 300.4Q381.5 297.9 383.1 297.4Q384.7 296.9 386.3 296.4Q387.9 295.9 390.0 297.4Q392.0 299.0 393.8 300.7Q395.6 302.4 397.1 304.1Q398.6 305.9 399.9 307.7Q401.1 309.6 402.0 311.5Q402.8 313.5 404.3 313.1Q405.8 312.8 407.2 312.4Q408.7 312.1 408.6 309.9Q408.5 307.8 408.8 305.6Q409.1 303.4 409.6 301.2Q410.2 298.9 411.0 296.6Q411.9 294.3 413.0 292.0Q414.1 289.6 415.7 289.3Q417.4 289.1 419.1 288.8Q420.7 288.6 422.5 290.5Q424.2 292.3 425.7 294.3Q427.3 296.2 428.5 298.2Q429.7 300.2 430.6 302.2Q431.6 304.2 432.1 306.3Q432.7 308.3 434.2 308.2Q435.7 308.1 437.2 308.0Q438.7 307.9 438.9 305.7Q439.2 303.6 439.8 301.5Q440.4 299.4 441.3 297.2Q442.2 295.1 443.4 292.9Q444.6 290.8 446.1 288.7Q447.5 286.5 449.2 286.5Q450.9 286.5 452.6 286.5Q454.2 286.5 455.7 288.7Q457.1 290.8 458.3 293.0Q459.5 295.1 460.4 297.2Q461.3 299.4 461.9 301.5Q462.5 303.7 462.7 305.8Q463.0 307.9 464.5 308.0Q466.0 308.1 467.5 308.3Q469.0 308.4 469.6 306.3Q470.1 304.3 471.0 302.3Q472.0 300.2 473.2 298.3Q474.5 296.3 476.0 294.4Q477.5 292.4 479.3 290.6Q481.0 288.7 482.7 288.9Q484.3 289.2 486.0 289.5Q487.7 289.8 488.8 292.1Q489.9 294.4 490.7 296.7Q491.5 299.0 492.1 301.3Q492.6 303.6 492.9 305.8Q493.2 308.0 493.0 310.1Q492.9 312.2 494.4 312.6Q495.9 312.9 497.4 313.3Q498.8 313.6 499.7 311.7Q500.6 309.8 501.8 307.9Q503.0 306.1 504.6 304.3Q506.1 302.6 507.9 300.9Q509.7 299.2 511.7 297.6Q513.8 296.1 515.4 296.6Q517.0 297.1 518.6 297.6Q520.2 298.2 520.9 300.6Q521.6 303.1 522.1 305.5Q522.5 307.9 522.7 310.3Q522.9 312.6 522.8 314.8Q522.8 317.0 522.3 319.1Q521.9 321.2 523.3 321.7Q524.7 322.3 526.1 322.9Q527.5 323.5 528.6 321.7Q529.8 319.9 531.3 318.3Q532.8 316.7 534.6 315.2Q536.4 313.7 538.4 312.3Q540.5 311.0 542.7 309.7Q545.0 308.5 546.5 309.2Q548.0 310.0 549.5 310.8Q551.0 311.5 551.3 314.1Q551.6 316.7 551.7 319.1Q551.8 321.6 551.6 323.9Q551.4 326.2 551.0 328.4Q550.6 330.6 549.8 332.6Q549.0 334.5 550.3 335.3Q551.6 336.1 552.9 336.9Q554.2 337.7 555.6 336.1Q557.1 334.6 558.8 333.2Q560.6 331.8 562.6 330.6Q564.6 329.4 566.8 328.4Q569.0 327.4 571.4 326.5Q573.9 325.6 575.2 326.6Q576.6 327.6 577.9 328.6Q579.3 329.6 579.2 332.2Q579.1 334.7 578.8 337.2Q578.5 339.6 578.0 341.9Q577.5 344.2 576.7 346.2Q575.9 348.3 574.9 350.2Q573.8 352.0 574.9 353.0Q576.1 354.0 577.2 355.0Q578.4 356.0 580.0 354.6Q581.7 353.3 583.6 352.2Q585.6 351.1 587.7 350.3Q589.9 349.4 592.3 348.7Q594.6 348.0 597.2 347.6Q599.7 347.1 600.9 348.3Q602.1 349.4 603.3 350.6Q604.4 351.8 604.0 354.4Q603.5 356.9 602.8 359.3Q602.1 361.6 601.2 363.8Q600.3 365.9 599.3 367.9Q598.2 369.8 596.8 371.5Q595.5 373.1 596.5 374.3Q597.5 375.4 598.5 376.6Q599.4 377.7 601.3 376.7Q603.1 375.6 605.2 374.9Q607.3 374.1 609.6 373.6Q611.8 373.1 614.3 372.8Q616.7 372.5 619.3 372.4Q621.9 372.3 622.9 373.7Q623.8 375.0 624.8 376.4Q625.8 377.8 624.9 380.2Q624.0 382.6 623.0 384.8Q622.0 387.0 620.8 389.0Q619.6 391.0 618.2 392.8Q616.8 394.5 615.2 395.9Q613.6 397.4 614.4 398.7Q615.2 399.9 616.0 401.2Q616.8 402.5 618.8 401.8Q620.8 401.0 623.0 400.6Q625.1 400.2 627.5 400.0Q629.8 399.9 632.2 399.9Q634.7 400.0 637.2 400.4Q639.8 400.7 640.6 402.2Q641.3 403.7 642.1 405.2Q642.8 406.7 641.6 408.9Q640.3 411.2 639.0 413.2Q637.6 415.3 636.1 417.0Q634.6 418.8 633.0 420.3Q631.3 421.8 629.5 423.0Q627.8 424.2 628.3 425.6Q628.9 427.0 629.5 428.4Q630.1 429.8 632.2 429.3Q634.2 428.9 636.5 428.8Q638.7 428.7 641.0 428.9Q643.3 429.1 645.7 429.6Q648.1 430.1 650.6 430.8Q653.1 431.5 653.6 433.1Q654.1 434.7 654.6 436.3Q655.1 437.9 653.6 440.0Q652.0 442.0 650.3 443.8Q648.6 445.6 646.9 447.1Q645.1 448.6 643.3 449.9Q641.4 451.1 639.5 452.0Q637.5 452.8 637.9 454.3Q638.2 455.8 638.6 457.2Q638.9 458.7 641.1 458.6Q643.2 458.5 645.4 458.8Q647.6 459.1 649.8 459.6Q652.1 460.2 654.4 461.0Q656.7 461.9 659.0 463.0Q661.4 464.1 661.7 465.7Q661.9 467.4 662.2 469.1Q662.4 470.7 660.5 472.5Q658.7 474.2 656.7 475.7Q654.8 477.3 652.8 478.5Q650.8 479.7 648.8 480.6Q646.8 481.6 644.7 482.1Q642.7 482.7 642.8 484.2Z"/>
<path class="g" d="M572.3 483.4Q572.5 485.1 572.7 486.9Q572.9 488.6 575.0 488.8Q577.2 489.0 579.3 489.5Q581.5 490.0 583.6 490.9Q585.8 491.7 588.0 492.7Q590.1 493.8 592.3 495.1Q594.4 496.4 594.5 498.1Q594.5 499.9 594.5 501.6Q594.5 503.4 592.3 504.7Q590.2 506.0 588.0 507.1Q585.9 508.2 583.7 509.0Q581.6 509.8 579.4 510.4Q577.3 510.9 575.1 511.1Q573.0 511.3 572.8 513.1Q572.7 514.8 572.4 516.5Q572.2 518.2 574.2 518.9Q576.3 519.6 578.2 520.7Q580.2 521.7 582.1 523.0Q584.0 524.3 585.8 525.8Q587.7 527.4 589.5 529.2Q591.2 530.9 590.9 532.6Q590.5 534.4 590.0 536.1Q589.6 537.8 587.2 538.5Q584.8 539.3 582.5 539.8Q580.1 540.3 577.8 540.6Q575.5 540.9 573.3 540.9Q571.1 541.0 569.0 540.6Q566.9 540.3 566.3 542.0Q565.7 543.6 565.1 545.2Q564.4 546.9 566.2 548.0Q568.0 549.2 569.7 550.6Q571.3 552.1 572.9 553.8Q574.4 555.6 575.8 557.5Q577.3 559.4 578.6 561.6Q579.9 563.7 579.1 565.3Q578.3 566.9 577.5 568.4Q576.6 570.0 574.1 570.1Q571.6 570.3 569.2 570.2Q566.8 570.2 564.5 569.9Q562.2 569.7 560.1 569.2Q557.9 568.6 555.9 567.8Q554.0 567.0 553.0 568.5Q552.0 569.9 551.0 571.4Q550.0 572.8 551.5 574.3Q553.0 575.9 554.2 577.7Q555.5 579.5 556.6 581.6Q557.6 583.6 558.6 585.8Q559.5 588.1 560.2 590.5Q561.0 592.8 559.8 594.2Q558.7 595.5 557.5 596.8Q556.3 598.1 553.9 597.7Q551.4 597.3 549.1 596.6Q546.8 596.0 544.6 595.2Q542.4 594.4 540.5 593.4Q538.5 592.4 536.8 591.1Q535.0 589.9 533.7 591.0Q532.5 592.2 531.1 593.4Q529.8 594.5 530.9 596.3Q532.0 598.2 532.7 600.3Q533.5 602.4 534.1 604.6Q534.6 606.8 535.0 609.2Q535.4 611.6 535.5 614.1Q535.7 616.6 534.2 617.6Q532.8 618.7 531.4 619.6Q529.9 620.6 527.6 619.6Q525.3 618.6 523.2 617.4Q521.1 616.3 519.2 615.0Q517.3 613.7 515.6 612.2Q513.9 610.8 512.6 609.1Q511.2 607.5 509.7 608.3Q508.1 609.2 506.6 610.0Q505.0 610.7 505.6 612.8Q506.2 614.9 506.5 617.1Q506.7 619.3 506.7 621.6Q506.7 623.9 506.5 626.3Q506.3 628.7 505.9 631.1Q505.4 633.6 503.8 634.3Q502.2 634.9 500.5 635.5Q498.9 636.1 496.9 634.6Q494.9 633.1 493.1 631.4Q491.3 629.8 489.8 628.1Q488.3 626.4 487.0 624.5Q485.7 622.7 484.8 620.8Q483.8 618.9 482.1 619.3Q480.5 619.8 478.8 620.2Q477.1 620.6 477.1 622.7Q477.2 624.9 476.9 627.1Q476.7 629.3 476.1 631.5Q475.6 633.8 474.8 636.0Q474.0 638.3 473.0 640.6Q472.0 642.9 470.2 643.1Q468.5 643.4 466.7 643.6Q465.0 643.8 463.4 641.8Q461.9 639.8 460.5 637.8Q459.2 635.8 458.1 633.8Q457.1 631.7 456.2 629.7Q455.4 627.6 455.0 625.5Q454.5 623.4 452.8 623.5Q451.0 623.5 449.3 623.5Q447.6 623.5 447.1 625.6Q446.7 627.6 445.9 629.7Q445.1 631.8 444.0 633.8Q443.0 635.9 441.7 637.9Q440.3 639.9 438.8 641.9Q437.3 643.9 435.5 643.7Q433.8 643.5 432.0 643.3Q430.3 643.1 429.2 640.8Q428.2 638.5 427.4 636.2Q426.6 634.0 426.0 631.7Q425.5 629.5 425.2 627.3Q424.9 625.1 424.9 623.0Q425.0 620.8 423.3 620.4Q421.6 620.1 419.9 619.6Q418.2 619.2 417.3 621.1Q416.4 623.0 415.1 624.9Q413.8 626.7 412.3 628.4Q410.8 630.2 409.0 631.8Q407.3 633.5 405.3 635.0Q403.3 636.6 401.7 636.0Q400.0 635.4 398.4 634.7Q396.7 634.1 396.3 631.6Q395.8 629.2 395.6 626.8Q395.3 624.4 395.3 622.1Q395.3 619.8 395.6 617.5Q395.8 615.3 396.4 613.3Q396.9 611.2 395.4 610.4Q393.8 609.7 392.3 608.8Q390.7 608.0 389.4 609.7Q388.0 611.3 386.4 612.8Q384.7 614.2 382.8 615.6Q380.9 616.9 378.8 618.1Q376.7 619.2 374.4 620.3Q372.1 621.3 370.7 620.3Q369.2 619.4 367.8 618.4Q366.3 617.3 366.5 614.8Q366.6 612.3 367.0 610.0Q367.3 607.6 367.8 605.3Q368.4 603.1 369.1 601.0Q369.9 598.9 370.9 597.0Q372.0 595.2 370.7 594.1Q369.3 592.9 368.0 591.8Q366.8 590.6 365.0 591.9Q363.3 593.1 361.4 594.2Q359.4 595.2 357.2 596.0Q355.1 596.8 352.8 597.5Q350.4 598.1 348.0 598.6Q345.5 599.1 344.3 597.8Q343.1 596.5 342.0 595.1Q340.8 593.8 341.6 591.4Q342.3 589.0 343.2 586.8Q344.1 584.5 345.2 582.5Q346.2 580.4 347.5 578.6Q348.7 576.8 350.2 575.2Q351.6 573.6 350.6 572.2Q349.6 570.8 348.6 569.4Q347.6 567.9 345.7 568.8Q343.7 569.6 341.5 570.1Q339.4 570.6 337.1 570.9Q334.8 571.2 332.4 571.3Q330.0 571.4 327.5 571.2Q325.0 571.1 324.1 569.5Q323.3 568.0 322.5 566.4Q321.7 564.8 323.0 562.7Q324.2 560.5 325.7 558.6Q327.1 556.6 328.6 554.9Q330.1 553.2 331.8 551.7Q333.4 550.2 335.2 549.0Q337.0 547.9 336.3 546.2Q335.7 544.6 335.1 543.0Q334.5 541.3 332.4 541.7Q330.3 542.0 328.0 542.0Q325.8 542.0 323.5 541.7Q321.2 541.5 318.9 541.0Q316.5 540.5 314.1 539.7Q311.7 539.0 311.3 537.3Q310.8 535.6 310.4 533.9Q310.0 532.1 311.8 530.4Q313.5 528.6 315.4 527.0Q317.2 525.5 319.1 524.1Q321.0 522.8 323.0 521.8Q324.9 520.7 326.9 520.0Q328.9 519.3 328.7 517.6Q328.5 515.9 328.3 514.1Q328.1 512.4 326.0 512.2Q323.8 512.0 321.7 511.5Q319.5 511.0 317.4 510.1Q315.2 509.3 313.0 508.3Q310.9 507.2 308.7 505.9Q306.6 504.6 306.5 502.9Q306.5 501.1 306.5 499.4Q306.5 497.6 308.7 496.3Q310.8 495.0 313.0 493.9Q315.1 492.8 317.3 492.0Q319.4 491.2 321.6 490.6Q323.7 490.1 325.9 489.9Q328.0 489.7 328.2 487.9Q328.3 486.2 328.6 484.5Q328.8 482.8 326.8 482.1Q324.7 481.4 322.8 480.3Q320.8 479.3 318.9 478.0Q317.0 476.7 315.2 475.2Q313.3 473.6 311.5 471.8Q309.8 470.1 310.1 468.4Q310.5 466.6 311.0 464.9Q311.4 463.2 313.8 462.5Q316.2 461.7 318.5 461.2Q320.9 460.7 323.2 460.4Q325.5 460.1 327.7 460.1Q329.9 460.0 332.0 460.4Q334.1 460.7 334.7 459.0Q335.3 457.4 335.9 455.8Q336.6 454.1 334.8 453.0Q333.0 451.8 331.3 450.4Q329.7 448.9 328.1 447.2Q326.6 445.4 325.2 443.5Q323.7 441.6 322.4 439.4Q321.1 437.3 321.9 435.7Q322.7 434.1 323.5 432.6Q324.4 431.0 326.9 430.9Q329.4 430.7 331.8 430.8Q334.2 430.8 336.5 431.1Q338.8 431.3 340.9 431.8Q343.1 432.4 345.1 433.2Q347.0 434.0 348.0 432.5Q349.0 431.1 350.0 429.6Q351.0 428.2 349.5 426.7Q348.0 425.1 346.8 423.3Q345.5 421.5 344.4 419.4Q343.4 417.4 342.4 415.2Q341.5 412.9 340.8 410.5Q340.0 408.2 341.2 406.8Q342.3 405.5 343.5 404.2Q344.7 402.9 347.1 403.3Q349.6 403.7 351.9 404.4Q354.2 405.0 356.4 405.8Q358.6 406.6 360.5 407.6Q362.5 408.6 364.2 409.9Q366.0 411.1 367.3 410.0Q368.5 408.8 369.9 407.6Q371.2 406.5 370.1 404.7Q369.0 402.8 368.3 400.7Q367.5 398.6 366.9 396.4Q366.4 394.2 366.0 391.8Q365.6 389.4 365.5 386.9Q365.3 384.4 366.8 383.4Q368.2 382.3 369.6 381.4Q371.1 380.4 373.4 381.4Q375.7 382.4 377.8 383.6Q379.9 384.7 381.8 386.0Q383.7 387.3 385.4 388.8Q387.1 390.2 388.4 391.9Q389.8 393.5 391.3 392.7Q392.9 391.8 394.4 391.0Q396.0 390.3 395.4 388.2Q394.8 386.1 394.5 383.9Q394.3 381.7 394.3 379.4Q394.3 377.1 394.5 374.7Q394.7 372.3 395.1 369.9Q395.6 367.4 397.2 366.7Q398.8 366.1 400.5 365.5Q402.1 364.9 404.1 366.4Q406.1 367.9 407.9 369.6Q409.7 371.2 411.2 372.9Q412.7 374.6 414.0 376.5Q415.3 378.3 416.2 380.2Q417.2 382.1 418.9 381.7Q420.5 381.2 422.2 380.8Q423.9 380.4 423.9 378.3Q423.8 376.1 424.1 373.9Q424.3 371.7 424.9 369.5Q425.4 367.2 426.2 365.0Q427.0 362.7 428.0 360.4Q429.0 358.1 430.8 357.9Q432.5 357.6 434.3 357.4Q436.0 357.2 437.6 359.2Q439.1 361.2 440.5 363.2Q441.8 365.2 442.9 367.2Q443.9 369.3 444.8 371.3Q445.6 373.4 446.0 375.5Q446.5 377.6 448.2 377.5Q450.0 377.5 451.7 377.5Q453.4 377.5 453.9 375.4Q454.3 373.4 455.1 371.3Q455.9 369.2 457.0 367.2Q458.0 365.1 459.3 363.1Q460.7 361.1 462.2 359.1Q463.7 357.1 465.5 357.3Q467.2 357.5 469.0 357.7Q470.7 357.9 471.8 360.2Q472.8 362.5 473.6 364.8Q474.4 367.0 475.0 369.3Q475.5 371.5 475.8 373.7Q476.1 375.9 476.1 378.0Q476.0 380.2 477.7 380.6Q479.4 380.9 481.1 381.4Q482.8 381.8 483.7 379.9Q484.6 378.0 485.9 376.1Q487.2 374.3 488.7 372.6Q490.2 370.8 492.0 369.2Q493.7 367.5 495.7 366.0Q497.7 364.4 499.3 365.0Q501.0 365.6 502.6 366.3Q504.3 366.9 504.7 369.4Q505.2 371.8 505.4 374.2Q505.7 376.6 505.7 378.9Q505.7 381.2 505.4 383.5Q505.2 385.7 504.6 387.7Q504.1 389.8 505.6 390.6Q507.2 391.3 508.7 392.2Q510.3 393.0 511.6 391.3Q513.0 389.7 514.6 388.2Q516.3 386.8 518.2 385.4Q520.1 384.1 522.2 382.9Q524.3 381.8 526.6 380.7Q528.9 379.7 530.3 380.7Q531.8 381.6 533.2 382.6Q534.7 383.7 534.5 386.2Q534.4 388.7 534.0 391.0Q533.7 393.4 533.2 395.7Q532.6 397.9 531.9 400.0Q531.1 402.1 530.1 404.0Q529.0 405.8 530.3 406.9Q531.7 408.1 533.0 409.2Q534.2 410.4 536.0 409.1Q537.7 407.9 539.6 406.8Q541.6 405.8 543.8 405.0Q545.9 404.2 548.2 403.5Q550.6 402.9 553.0 402.4Q555.5 401.9 556.7 403.2Q557.9 404.5 559.0 405.9Q560.2 407.2 559.4 409.6Q558.7 412.0 557.8 414.2Q556.9 416.5 555.8 418.5Q554.8 420.6 553.5 422.4Q552.3 424.2 550.8 425.8Q549.4 427.4 550.4 428.8Q551.4 430.2 552.4 431.6Q553.4 433.1 555.3 432.2Q557.3 431.4 559.5 430.9Q561.6 430.4 563.9 430.1Q566.2 429.8 568.6 429.7Q571.0 429.6 573.5 429.8Q576.0 429.9 576.9 431.5Q577.7 433.0 578.5 434.6Q579.3 436.2 578.0 438.3Q576.8 440.5 575.3 442.4Q573.9 444.4 572.4 446.1Q570.9 447.8 569.2 449.3Q567.6 450.8 565.8 452.0Q564.0 453.1 564.7 454.8Q565.3 456.4 565.9 458.0Q566.5 459.7 568.6 459.3Q570.7 459.0 573.0 459.0Q575.2 459.0 577.5 459.3Q579.8 459.5 582.1 460.0Q584.5 460.5 586.9 461.3Q589.3 462.0 589.7 463.7Q590.2 465.4 590.6 467.1Q591.0 468.9 589.2 470.6Q587.5 472.4 585.6 474.0Q583.8 475.5 581.9 476.9Q580.0 478.2 578.0 479.2Q576.1 480.3 574.1 481.0Q572.1 481.7 572.3 483.4Z"/>
<circle cx="450.50" cy="500.50" r="37.00" class="c"/>
<circle cx="450.50" cy="500.50" r="2.50" class="c"/>
<path class="g" d="M508.0 157.9Q509.9 157.6 511.9 157.5Q513.8 157.4 513.9 155.2Q514.0 152.9 514.5 150.7Q515.0 148.5 515.8 146.3Q516.7 144.0 517.9 141.8Q519.1 139.6 520.7 137.4Q522.3 135.2 523.9 135.3Q525.6 135.3 527.2 135.4Q528.8 135.5 530.2 137.9Q531.6 140.2 532.6 142.5Q533.6 144.9 534.2 147.2Q534.8 149.5 535.1 151.7Q535.3 154.0 535.2 156.2Q535.1 158.4 537.0 158.7Q538.9 159.1 540.8 159.5Q542.7 159.9 543.5 157.8Q544.2 155.7 545.3 153.7Q546.4 151.7 547.8 149.8Q549.2 147.9 551.0 146.1Q552.8 144.3 555.0 142.7Q557.1 141.0 558.7 141.6Q560.2 142.1 561.7 142.6Q563.3 143.2 563.9 145.8Q564.6 148.4 564.9 150.9Q565.2 153.5 565.1 155.8Q565.1 158.2 564.7 160.5Q564.3 162.7 563.6 164.8Q562.9 166.9 564.6 167.7Q566.4 168.6 568.1 169.5Q569.8 170.4 571.1 168.6Q572.3 166.8 573.9 165.2Q575.6 163.6 577.5 162.2Q579.4 160.8 581.6 159.6Q583.8 158.4 586.4 157.4Q588.9 156.4 590.2 157.4Q591.6 158.3 592.9 159.2Q594.2 160.2 594.1 162.9Q594.0 165.6 593.6 168.1Q593.1 170.6 592.4 172.9Q591.7 175.2 590.7 177.2Q589.7 179.2 588.4 181.0Q587.1 182.8 588.6 184.2Q590.0 185.5 591.4 186.8Q592.7 188.2 594.5 186.8Q596.2 185.5 598.2 184.4Q600.2 183.3 602.4 182.5Q604.7 181.6 607.2 181.1Q609.6 180.6 612.3 180.4Q615.0 180.1 616.0 181.4Q617.1 182.7 618.1 184.0Q619.0 185.3 618.2 187.8Q617.3 190.4 616.2 192.7Q615.1 194.9 613.8 196.9Q612.5 198.9 610.9 200.6Q609.4 202.3 607.6 203.6Q605.9 205.0 606.9 206.6Q607.9 208.3 608.8 210.0Q609.8 211.7 611.8 210.9Q613.9 210.1 616.1 209.6Q618.3 209.1 620.7 208.9Q623.1 208.8 625.6 209.0Q628.1 209.2 630.8 209.7Q633.4 210.3 634.1 211.8Q634.7 213.3 635.3 214.8Q635.8 216.3 634.3 218.5Q632.7 220.7 631.0 222.6Q629.3 224.5 627.5 226.0Q625.7 227.5 623.7 228.7Q621.8 229.9 619.7 230.7Q617.7 231.5 618.2 233.4Q618.7 235.3 619.1 237.2Q619.5 239.1 621.7 238.9Q623.9 238.7 626.2 238.8Q628.4 239.0 630.8 239.5Q633.1 240.0 635.5 240.9Q637.8 241.8 640.2 243.1Q642.6 244.3 642.8 246.0Q643.0 247.6 643.1 249.2Q643.2 250.8 641.1 252.5Q639.0 254.2 636.8 255.5Q634.7 256.8 632.5 257.8Q630.3 258.7 628.1 259.3Q625.9 259.9 623.7 260.1Q621.5 260.3 621.4 262.2Q621.4 264.2 621.2 266.1Q621.1 268.1 623.3 268.5Q625.5 268.9 627.6 269.7Q629.7 270.5 631.8 271.6Q633.9 272.8 635.9 274.3Q637.9 275.8 639.9 277.7Q641.8 279.6 641.5 281.2Q641.2 282.8 640.9 284.4Q640.6 286.0 638.1 287.0Q635.6 288.1 633.1 288.7Q630.7 289.4 628.3 289.7Q625.9 290.0 623.7 289.9Q621.4 289.8 619.2 289.4Q617.1 289.0 616.5 290.8Q615.8 292.7 615.2 294.5Q614.5 296.3 616.5 297.3Q618.4 298.4 620.3 299.7Q622.1 301.1 623.8 302.8Q625.4 304.5 626.9 306.5Q628.5 308.5 629.8 310.9Q631.1 313.3 630.4 314.7Q629.6 316.2 628.9 317.6Q628.1 319.0 625.4 319.3Q622.7 319.6 620.2 319.5Q617.7 319.5 615.3 319.1Q613.0 318.7 610.8 318.0Q608.6 317.3 606.7 316.3Q604.7 315.3 603.6 316.9Q602.5 318.5 601.4 320.0Q600.2 321.6 601.8 323.1Q603.4 324.6 604.8 326.5Q606.1 328.3 607.3 330.4Q608.4 332.5 609.3 334.9Q610.1 337.2 610.7 339.9Q611.3 342.5 610.2 343.7Q609.1 344.9 608.0 346.0Q606.9 347.2 604.2 346.7Q601.5 346.2 599.1 345.5Q596.7 344.7 594.6 343.7Q592.4 342.6 590.5 341.3Q588.7 340.1 587.1 338.5Q585.5 337.0 584.0 338.2Q582.5 339.5 580.9 340.6Q579.3 341.8 580.5 343.7Q581.6 345.6 582.4 347.8Q583.2 349.9 583.6 352.2Q584.1 354.6 584.3 357.1Q584.5 359.6 584.3 362.3Q584.2 365.0 582.8 365.8Q581.4 366.7 579.9 367.5Q578.5 368.2 576.1 367.0Q573.7 365.8 571.6 364.4Q569.5 363.0 567.7 361.4Q566.0 359.8 564.5 358.0Q563.1 356.3 562.0 354.4Q560.9 352.4 559.1 353.2Q557.3 353.9 555.5 354.6Q553.7 355.3 554.2 357.5Q554.7 359.6 554.9 361.9Q555.0 364.2 554.8 366.5Q554.7 368.9 554.1 371.4Q553.6 373.8 552.6 376.4Q551.7 378.9 550.2 379.3Q548.6 379.7 547.0 380.1Q545.4 380.5 543.4 378.6Q541.4 376.8 539.8 374.8Q538.2 372.9 537.0 370.8Q535.7 368.8 534.9 366.7Q534.0 364.6 533.4 362.5Q532.9 360.3 531.0 360.5Q529.1 360.8 527.1 360.9Q525.2 361.0 525.1 363.2Q525.0 365.5 524.5 367.7Q524.0 369.9 523.2 372.1Q522.3 374.4 521.1 376.6Q519.9 378.8 518.3 381.0Q516.7 383.2 515.1 383.1Q513.4 383.1 511.8 383.0Q510.2 382.9 508.8 380.5Q507.4 378.2 506.4 375.9Q505.4 373.5 504.8 371.2Q504.2 368.9 503.9 366.7Q503.7 364.4 503.8 362.2Q503.9 360.0 502.0 359.7Q500.1 359.3 498.2 358.9Q496.3 358.5 495.5 360.6Q494.8 362.7 493.7 364.7Q492.6 366.7 491.2 368.6Q489.8 370.5 488.0 372.3Q486.2 374.1 484.0 375.7Q481.9 377.4 480.3 376.8Q478.8 376.3 477.3 375.8Q475.7 375.2 475.1 372.6Q474.4 370.0 474.1 367.5Q473.8 364.9 473.9 362.6Q473.9 360.2 474.3 357.9Q474.7 355.7 475.4 353.6Q476.1 351.5 474.4 350.7Q472.6 349.8 470.9 348.9Q469.2 348.0 467.9 349.8Q466.7 351.6 465.1 353.2Q463.4 354.8 461.5 356.2Q459.6 357.6 457.4 358.8Q455.2 360.0 452.6 361.0Q450.1 362.0 448.8 361.0Q447.4 360.1 446.1 359.2Q444.8 358.2 444.9 355.5Q445.0 352.8 445.4 350.3Q445.9 347.8 446.6 345.5Q447.3 343.2 448.3 341.2Q449.3 339.2 450.6 337.4Q451.9 335.6 450.4 334.2Q449.0 332.9 447.6 331.6Q446.3 330.2 444.5 331.6Q442.8 332.9 440.8 334.0Q438.8 335.1 436.6 335.9Q434.3 336.8 431.8 337.3Q429.4 337.8 426.7 338.0Q424.0 338.3 423.0 337.0Q421.9 335.7 420.9 334.4Q420.0 333.1 420.8 330.6Q421.7 328.0 422.8 325.7Q423.9 323.5 425.2 321.5Q426.5 319.5 428.1 317.8Q429.6 316.1 431.4 314.8Q433.1 313.4 432.1 311.8Q431.1 310.1 430.2 308.4Q429.2 306.7 427.2 307.5Q425.1 308.3 422.9 308.8Q420.7 309.3 418.3 309.5Q415.9 309.6 413.4 309.4Q410.9 309.2 408.2 308.7Q405.6 308.1 404.9 306.6Q404.3 305.1 403.7 303.6Q403.2 302.1 404.7 299.9Q406.3 297.7 408.0 295.8Q409.7 293.9 411.5 292.4Q413.3 290.9 415.3 289.7Q417.2 288.5 419.3 287.7Q421.3 286.9 420.8 285.0Q420.3 283.1 419.9 281.2Q419.5 279.3 417.3 279.5Q415.1 279.7 412.8 279.6Q410.6 279.4 408.2 278.9Q405.9 278.4 403.5 277.5Q401.2 276.6 398.8 275.3Q396.4 274.1 396.2 272.4Q396.0 270.8 395.9 269.2Q395.8 267.6 397.9 265.9Q400.0 264.2 402.2 262.9Q404.3 261.6 406.5 260.6Q408.7 259.7 410.9 259.1Q413.1 258.5 415.3 258.3Q417.5 258.1 417.6 256.2Q417.6 254.2 417.8 252.3Q417.9 250.3 415.7 249.9Q413.5 249.5 411.4 248.7Q409.3 247.9 407.2 246.8Q405.1 245.6 403.1 244.1Q401.1 242.6 399.1 240.7Q397.2 238.8 397.5 237.2Q397.8 235.6 398.1 234.0Q398.4 232.4 400.9 231.4Q403.4 230.3 405.9 229.7Q408.3 229.0 410.7 228.7Q413.1 228.4 415.3 228.5Q417.6 228.6 419.8 229.0Q421.9 229.4 422.5 227.6Q423.2 225.7 423.8 223.9Q424.5 222.1 422.5 221.1Q420.6 220.0 418.7 218.7Q416.9 217.3 415.2 215.6Q413.6 213.9 412.1 211.9Q410.5 209.9 409.2 207.5Q407.9 205.1 408.6 203.7Q409.4 202.2 410.1 200.8Q410.9 199.4 413.6 199.1Q416.3 198.8 418.8 198.9Q421.3 198.9 423.7 199.3Q426.0 199.7 428.2 200.4Q430.4 201.1 432.3 202.1Q434.3 203.1 435.4 201.5Q436.5 199.9 437.6 198.4Q438.8 196.8 437.2 195.3Q435.6 193.8 434.2 191.9Q432.9 190.1 431.7 188.0Q430.6 185.9 429.7 183.5Q428.9 181.2 428.3 178.5Q427.7 175.9 428.8 174.7Q429.9 173.5 431.0 172.4Q432.1 171.2 434.8 171.7Q437.5 172.2 439.9 172.9Q442.3 173.7 444.4 174.7Q446.6 175.8 448.5 177.1Q450.3 178.3 451.9 179.9Q453.5 181.4 455.0 180.2Q456.5 178.9 458.1 177.8Q459.7 176.6 458.5 174.7Q457.4 172.8 456.6 170.6Q455.8 168.5 455.4 166.2Q454.9 163.8 454.7 161.3Q454.5 158.8 454.7 156.1Q454.8 153.4 456.2 152.6Q457.6 151.7 459.1 150.9Q460.5 150.2 462.9 151.4Q465.3 152.6 467.4 154.0Q469.5 155.4 471.3 157.0Q473.0 158.6 474.5 160.4Q475.9 162.1 477.0 164.0Q478.1 166.0 479.9 165.2Q481.7 164.5 483.5 163.8Q485.3 163.1 484.8 160.9Q484.3 158.8 484.1 156.5Q484.0 154.2 484.2 151.9Q484.3 149.5 484.9 147.0Q485.4 144.6 486.4 142.0Q487.3 139.5 488.8 139.1Q490.4 138.7 492.0 138.3Q493.6 137.9 495.6 139.8Q497.6 141.6 499.2 143.6Q500.8 145.5 502.0 147.6Q503.3 149.6 504.1 151.7Q505.0 153.8 505.6 155.9Q506.1 158.1 508.0 157.9Z"/>
<path class="g" d="M724.3 655.7Q724.8 657.6 725.2 659.5Q725.6 661.4 727.8 661.2Q730.0 661.0 732.3 661.2Q734.5 661.4 736.9 661.9Q739.2 662.5 741.5 663.4Q743.9 664.3 746.3 665.6Q748.7 666.9 748.8 668.5Q749.0 670.1 749.1 671.7Q749.2 673.4 747.1 675.0Q744.9 676.7 742.8 678.0Q740.6 679.3 738.4 680.2Q736.2 681.1 734.0 681.7Q731.8 682.3 729.6 682.5Q727.4 682.6 727.3 684.6Q727.2 686.5 727.1 688.5Q726.9 690.4 729.1 690.8Q731.3 691.3 733.4 692.1Q735.5 692.9 737.6 694.1Q739.7 695.3 741.7 696.8Q743.7 698.3 745.6 700.3Q747.5 702.2 747.2 703.8Q746.9 705.4 746.5 706.9Q746.2 708.5 743.7 709.5Q741.2 710.6 738.7 711.2Q736.3 711.8 733.9 712.1Q731.5 712.3 729.3 712.3Q727.0 712.2 724.8 711.7Q722.6 711.3 722.0 713.1Q721.4 715.0 720.7 716.8Q720.0 718.6 722.0 719.6Q723.9 720.7 725.7 722.0Q727.5 723.4 729.2 725.1Q730.9 726.8 732.4 728.9Q733.8 730.9 735.1 733.3Q736.4 735.7 735.7 737.1Q735.0 738.6 734.2 740.0Q733.4 741.4 730.7 741.7Q728.0 741.9 725.5 741.9Q723.0 741.8 720.6 741.4Q718.3 740.9 716.1 740.2Q713.9 739.5 712.0 738.5Q710.0 737.4 708.9 739.0Q707.8 740.6 706.6 742.2Q705.5 743.7 707.0 745.2Q708.6 746.8 710.0 748.6Q711.3 750.5 712.4 752.6Q713.5 754.7 714.4 757.1Q715.2 759.4 715.8 762.1Q716.4 764.7 715.3 765.9Q714.2 767.1 713.0 768.2Q711.9 769.4 709.2 768.9Q706.5 768.4 704.1 767.6Q701.7 766.8 699.6 765.7Q697.5 764.7 695.6 763.4Q693.7 762.1 692.1 760.5Q690.6 759.0 689.0 760.2Q687.5 761.4 686.0 762.5Q684.4 763.7 685.5 765.6Q686.6 767.6 687.4 769.7Q688.1 771.8 688.6 774.2Q689.1 776.5 689.2 779.0Q689.4 781.6 689.2 784.3Q689.0 787.0 687.6 787.8Q686.2 788.6 684.7 789.4Q683.3 790.1 680.9 788.9Q678.5 787.7 676.4 786.2Q674.3 784.8 672.6 783.2Q670.8 781.6 669.4 779.8Q668.0 778.0 666.9 776.1Q665.8 774.1 664.0 774.9Q662.2 775.6 660.4 776.3Q658.6 777.0 659.1 779.1Q659.6 781.3 659.7 783.5Q659.9 785.8 659.6 788.2Q659.4 790.6 658.9 793.0Q658.3 795.5 657.4 798.0Q656.4 800.6 654.8 800.9Q653.3 801.3 651.7 801.7Q650.1 802.0 648.1 800.2Q646.2 798.3 644.6 796.3Q643.0 794.4 641.8 792.3Q640.5 790.3 639.7 788.2Q638.8 786.1 638.3 783.9Q637.8 781.7 635.9 781.9Q633.9 782.1 632.0 782.3Q630.1 782.4 629.9 784.6Q629.8 786.8 629.3 789.0Q628.8 791.2 627.9 793.5Q627.1 795.7 625.8 797.9Q624.6 800.1 623.0 802.3Q621.3 804.4 619.7 804.4Q618.1 804.3 616.5 804.2Q614.8 804.1 613.5 801.7Q612.1 799.4 611.2 797.0Q610.2 794.7 609.6 792.4Q609.0 790.1 608.8 787.8Q608.5 785.6 608.6 783.3Q608.8 781.1 606.9 780.8Q605.0 780.4 603.1 780.0Q601.2 779.6 600.4 781.7Q599.7 783.7 598.6 785.7Q597.5 787.7 596.0 789.6Q594.5 791.5 592.7 793.3Q590.9 795.0 588.7 796.6Q586.6 798.3 585.0 797.7Q583.5 797.2 582.0 796.6Q580.5 796.1 579.8 793.4Q579.2 790.8 578.9 788.3Q578.6 785.8 578.7 783.4Q578.8 781.0 579.2 778.8Q579.6 776.5 580.3 774.5Q581.1 772.4 579.4 771.5Q577.6 770.6 575.9 769.7Q574.2 768.7 572.9 770.5Q571.6 772.3 570.0 773.9Q568.4 775.5 566.4 776.9Q564.5 778.3 562.3 779.5Q560.1 780.7 557.5 781.6Q555.0 782.6 553.6 781.6Q552.3 780.7 551.0 779.7Q549.7 778.7 549.9 776.0Q550.0 773.3 550.4 770.8Q550.9 768.3 551.6 766.1Q552.4 763.8 553.4 761.8Q554.4 759.7 555.7 758.0Q557.0 756.2 555.6 754.8Q554.2 753.5 552.8 752.1Q551.4 750.7 549.7 752.1Q547.9 753.4 545.9 754.5Q543.9 755.6 541.7 756.4Q539.4 757.2 537.0 757.7Q534.5 758.2 531.8 758.4Q529.1 758.6 528.1 757.3Q527.1 756.0 526.1 754.7Q525.1 753.4 526.0 750.9Q526.9 748.3 528.0 746.0Q529.1 743.8 530.5 741.8Q531.8 739.9 533.4 738.2Q534.9 736.5 536.7 735.2Q538.5 733.8 537.5 732.2Q536.5 730.5 535.6 728.8Q534.6 727.1 532.6 727.9Q530.5 728.7 528.3 729.1Q526.1 729.6 523.7 729.7Q521.3 729.9 518.8 729.6Q516.3 729.4 513.6 728.9Q511.0 728.3 510.4 726.8Q509.8 725.3 509.2 723.7Q508.6 722.2 510.2 720.0Q511.8 717.8 513.5 716.0Q515.2 714.1 517.1 712.6Q518.9 711.1 520.9 709.9Q522.8 708.8 524.9 708.0Q527.0 707.2 526.5 705.3Q526.0 703.4 525.6 701.5Q525.2 699.6 523.0 699.8Q520.8 700.0 518.5 699.8Q516.3 699.6 513.9 699.1Q511.6 698.5 509.3 697.6Q506.9 696.7 504.5 695.4Q502.1 694.1 502.0 692.5Q501.8 690.9 501.7 689.3Q501.6 687.6 503.7 686.0Q505.9 684.3 508.0 683.0Q510.2 681.7 512.4 680.8Q514.6 679.9 516.8 679.3Q519.0 678.7 521.2 678.5Q523.4 678.4 523.5 676.4Q523.6 674.5 523.7 672.5Q523.9 670.6 521.7 670.2Q519.5 669.7 517.4 668.9Q515.3 668.1 513.2 666.9Q511.1 665.7 509.1 664.2Q507.1 662.7 505.2 660.7Q503.3 658.8 503.6 657.2Q503.9 655.6 504.3 654.1Q504.6 652.5 507.1 651.5Q509.6 650.4 512.1 649.8Q514.5 649.2 516.9 648.9Q519.3 648.7 521.5 648.7Q523.8 648.8 526.0 649.3Q528.2 649.7 528.8 647.9Q529.4 646.0 530.1 644.2Q530.8 642.4 528.8 641.4Q526.9 640.3 525.1 639.0Q523.3 637.6 521.6 635.9Q519.9 634.2 518.4 632.1Q517.0 630.1 515.7 627.7Q514.4 625.3 515.1 623.9Q515.8 622.4 516.6 621.0Q517.4 619.6 520.1 619.3Q522.8 619.1 525.3 619.1Q527.8 619.2 530.2 619.6Q532.5 620.1 534.7 620.8Q536.9 621.5 538.8 622.5Q540.8 623.6 541.9 622.0Q543.0 620.4 544.2 618.8Q545.3 617.3 543.8 615.8Q542.2 614.2 540.8 612.4Q539.5 610.5 538.4 608.4Q537.3 606.3 536.4 603.9Q535.6 601.6 535.0 598.9Q534.4 596.3 535.5 595.1Q536.6 593.9 537.8 592.8Q538.9 591.6 541.6 592.1Q544.3 592.6 546.7 593.4Q549.1 594.2 551.2 595.3Q553.3 596.3 555.2 597.6Q557.1 598.9 558.7 600.5Q560.2 602.0 561.8 600.8Q563.3 599.6 564.8 598.5Q566.4 597.3 565.3 595.4Q564.2 593.4 563.4 591.3Q562.7 589.2 562.2 586.8Q561.7 584.5 561.6 582.0Q561.4 579.4 561.6 576.7Q561.8 574.0 563.2 573.2Q564.6 572.4 566.1 571.6Q567.5 570.9 569.9 572.1Q572.3 573.3 574.4 574.8Q576.5 576.2 578.2 577.8Q580.0 579.4 581.4 581.2Q582.8 583.0 583.9 584.9Q585.0 586.9 586.8 586.1Q588.6 585.4 590.4 584.7Q592.2 584.0 591.7 581.9Q591.2 579.7 591.1 577.5Q590.9 575.2 591.2 572.8Q591.4 570.4 591.9 568.0Q592.5 565.5 593.4 563.0Q594.4 560.4 596.0 560.1Q597.5 559.7 599.1 559.3Q600.7 559.0 602.7 560.8Q604.6 562.7 606.2 564.7Q607.8 566.6 609.0 568.7Q610.3 570.7 611.1 572.8Q612.0 574.9 612.5 577.1Q613.0 579.3 614.9 579.1Q616.9 578.9 618.8 578.7Q620.7 578.6 620.9 576.4Q621.0 574.2 621.5 572.0Q622.0 569.8 622.9 567.5Q623.7 565.3 625.0 563.1Q626.2 560.9 627.8 558.7Q629.5 556.6 631.1 556.6Q632.7 556.7 634.3 556.8Q636.0 556.9 637.3 559.3Q638.7 561.6 639.6 564.0Q640.6 566.3 641.2 568.6Q641.8 570.9 642.0 573.2Q642.3 575.4 642.2 577.7Q642.0 579.9 643.9 580.2Q645.8 580.6 647.7 581.0Q649.6 581.4 650.4 579.3Q651.1 577.3 652.2 575.3Q653.3 573.3 654.8 571.4Q656.3 569.5 658.1 567.7Q659.9 566.0 662.1 564.4Q664.2 562.7 665.8 563.3Q667.3 563.8 668.8 564.4Q670.3 564.9 671.0 567.6Q671.6 570.2 671.9 572.7Q672.2 575.2 672.1 577.6Q672.0 580.0 671.6 582.2Q671.2 584.5 670.5 586.5Q669.7 588.6 671.4 589.5Q673.2 590.4 674.9 591.3Q676.6 592.3 677.9 590.5Q679.2 588.7 680.8 587.1Q682.4 585.5 684.4 584.1Q686.3 582.7 688.5 581.5Q690.7 580.3 693.3 579.4Q695.8 578.4 697.2 579.4Q698.5 580.3 699.8 581.3Q701.1 582.3 700.9 585.0Q700.8 587.7 700.4 590.2Q699.9 592.7 699.2 594.9Q698.4 597.2 697.4 599.2Q696.4 601.3 695.1 603.0Q693.8 604.8 695.2 606.2Q696.6 607.5 698.0 608.9Q699.4 610.3 701.1 608.9Q702.9 607.6 704.9 606.5Q706.9 605.4 709.1 604.6Q711.4 603.8 713.8 603.3Q716.3 602.8 719.0 602.6Q721.7 602.4 722.7 603.7Q723.7 605.0 724.7 606.3Q725.7 607.6 724.8 610.1Q723.9 612.7 722.8 615.0Q721.7 617.2 720.3 619.2Q719.0 621.1 717.4 622.8Q715.9 624.5 714.1 625.8Q712.3 627.2 713.3 628.8Q714.3 630.5 715.2 632.2Q716.2 633.9 718.2 633.1Q720.3 632.3 722.5 631.9Q724.7 631.4 727.1 631.3Q729.5 631.1 732.0 631.4Q734.5 631.6 737.2 632.1Q739.8 632.7 740.4 634.2Q741.0 635.7 741.6 637.3Q742.2 638.8 740.6 641.0Q739.0 643.2 737.3 645.0Q735.6 646.9 733.7 648.4Q731.9 649.9 729.9 651.1Q728.0 652.2 725.9 653.0Q723.8 653.8 724.3 655.7Z"/>
<path class="g" d="M108.7 588.1Q108.2 586.2 107.7 584.3Q107.3 582.4 105.1 582.7Q102.9 582.9 100.6 582.7Q98.3 582.6 96.0 582.1Q93.7 581.6 91.3 580.7Q88.9 579.9 86.5 578.6Q84.1 577.4 83.9 575.8Q83.8 574.1 83.6 572.5Q83.5 570.9 85.6 569.2Q87.7 567.5 89.8 566.1Q92.0 564.8 94.1 563.8Q96.3 562.9 98.5 562.3Q100.7 561.7 102.9 561.4Q105.1 561.2 105.1 559.3Q105.2 557.3 105.3 555.4Q105.4 553.5 103.2 553.1Q101.1 552.7 98.9 551.9Q96.8 551.1 94.7 550.0Q92.6 548.8 90.6 547.3Q88.5 545.8 86.6 544.0Q84.6 542.1 84.9 540.5Q85.2 538.9 85.5 537.3Q85.8 535.7 88.3 534.6Q90.8 533.6 93.2 532.9Q95.7 532.2 98.0 531.9Q100.4 531.6 102.7 531.6Q104.9 531.7 107.1 532.1Q109.3 532.5 109.9 530.6Q110.5 528.8 111.1 527.0Q111.8 525.1 109.8 524.1Q107.8 523.1 106.0 521.8Q104.1 520.4 102.5 518.8Q100.8 517.1 99.2 515.1Q97.7 513.1 96.4 510.7Q95.0 508.4 95.7 506.9Q96.4 505.4 97.2 504.0Q97.9 502.6 100.6 502.2Q103.3 501.9 105.9 502.0Q108.4 502.0 110.7 502.4Q113.1 502.7 115.3 503.4Q117.4 504.1 119.4 505.1Q121.4 506.1 122.5 504.5Q123.6 502.9 124.7 501.3Q125.8 499.7 124.2 498.2Q122.6 496.7 121.2 494.9Q119.9 493.1 118.7 491.0Q117.6 488.9 116.7 486.6Q115.8 484.2 115.1 481.6Q114.5 478.9 115.6 477.7Q116.7 476.5 117.8 475.4Q118.9 474.2 121.6 474.7Q124.3 475.1 126.7 475.9Q129.1 476.6 131.3 477.6Q133.4 478.6 135.3 479.9Q137.2 481.2 138.8 482.7Q140.4 484.2 141.9 483.0Q143.4 481.7 145.0 480.5Q146.5 479.3 145.4 477.4Q144.3 475.5 143.4 473.4Q142.6 471.3 142.1 469.0Q141.6 466.6 141.4 464.1Q141.2 461.6 141.3 458.9Q141.5 456.2 142.9 455.3Q144.3 454.5 145.7 453.7Q147.1 452.9 149.5 454.1Q152.0 455.3 154.1 456.7Q156.2 458.1 157.9 459.7Q159.7 461.2 161.2 463.0Q162.6 464.7 163.8 466.6Q164.9 468.5 166.7 467.8Q168.5 467.0 170.3 466.3Q172.1 465.6 171.5 463.5Q171.0 461.3 170.8 459.0Q170.6 456.8 170.8 454.4Q171.0 452.0 171.5 449.5Q172.0 447.1 172.9 444.5Q173.8 442.0 175.4 441.5Q176.9 441.1 178.5 440.8Q180.1 440.4 182.1 442.2Q184.1 444.0 185.7 446.0Q187.3 447.9 188.6 449.9Q189.9 451.9 190.8 454.0Q191.7 456.1 192.2 458.3Q192.8 460.4 194.7 460.2Q196.6 459.9 198.6 459.8Q200.5 459.6 200.6 457.4Q200.7 455.2 201.1 453.0Q201.6 450.7 202.4 448.5Q203.2 446.3 204.4 444.0Q205.6 441.8 207.2 439.6Q208.8 437.4 210.4 437.5Q212.0 437.5 213.7 437.6Q215.3 437.7 216.7 440.0Q218.1 442.3 219.1 444.6Q220.1 446.9 220.8 449.2Q221.4 451.5 221.7 453.8Q222.0 456.0 221.9 458.3Q221.8 460.5 223.7 460.8Q225.6 461.1 227.5 461.5Q229.4 461.9 230.1 459.8Q230.8 457.7 231.9 455.7Q233.0 453.7 234.4 451.8Q235.8 449.8 237.6 448.0Q239.4 446.2 241.5 444.6Q243.7 442.9 245.2 443.4Q246.7 443.9 248.3 444.4Q249.8 445.0 250.5 447.6Q251.2 450.2 251.5 452.7Q251.8 455.2 251.8 457.6Q251.8 460.0 251.4 462.3Q251.0 464.5 250.3 466.6Q249.6 468.7 251.4 469.5Q253.1 470.4 254.8 471.3Q256.6 472.2 257.8 470.4Q259.1 468.6 260.7 466.9Q262.3 465.3 264.2 463.9Q266.1 462.5 268.3 461.2Q270.5 460.0 273.0 459.0Q275.6 458.0 276.9 458.9Q278.2 459.8 279.6 460.8Q280.9 461.7 280.8 464.4Q280.7 467.2 280.3 469.6Q279.9 472.1 279.2 474.4Q278.5 476.7 277.6 478.8Q276.6 480.8 275.3 482.6Q274.0 484.4 275.5 485.7Q276.9 487.0 278.3 488.4Q279.7 489.7 281.4 488.4Q283.1 487.0 285.1 485.9Q287.1 484.8 289.4 483.9Q291.6 483.1 294.0 482.5Q296.5 482.0 299.2 481.7Q301.9 481.5 302.9 482.7Q304.0 484.0 305.0 485.3Q306.0 486.6 305.1 489.1Q304.3 491.7 303.2 494.0Q302.1 496.3 300.8 498.3Q299.5 500.3 298.0 502.0Q296.5 503.6 294.7 505.0Q293.0 506.4 294.0 508.1Q295.0 509.7 296.0 511.4Q296.9 513.1 299.0 512.3Q301.0 511.4 303.3 510.9Q305.5 510.4 307.8 510.2Q310.2 510.1 312.7 510.2Q315.3 510.4 317.9 510.9Q320.6 511.4 321.2 512.9Q321.9 514.4 322.5 515.9Q323.0 517.4 321.5 519.7Q320.0 521.9 318.3 523.8Q316.6 525.7 314.8 527.2Q313.0 528.8 311.0 530.0Q309.1 531.2 307.1 532.0Q305.0 532.8 305.5 534.7Q306.0 536.6 306.5 538.5Q306.9 540.4 309.1 540.1Q311.3 539.9 313.6 540.1Q315.9 540.2 318.2 540.7Q320.5 541.2 322.9 542.1Q325.3 542.9 327.7 544.2Q330.1 545.4 330.3 547.0Q330.4 548.7 330.6 550.3Q330.7 551.9 328.6 553.6Q326.5 555.3 324.4 556.7Q322.2 558.0 320.1 559.0Q317.9 559.9 315.7 560.5Q313.5 561.1 311.3 561.4Q309.1 561.6 309.1 563.5Q309.0 565.5 308.9 567.4Q308.8 569.3 311.0 569.7Q313.1 570.1 315.3 570.9Q317.4 571.7 319.5 572.8Q321.6 574.0 323.6 575.5Q325.7 577.0 327.6 578.8Q329.6 580.7 329.3 582.3Q329.0 583.9 328.7 585.5Q328.4 587.1 325.9 588.2Q323.4 589.2 321.0 589.9Q318.5 590.6 316.2 590.9Q313.8 591.2 311.5 591.2Q309.3 591.1 307.1 590.7Q304.9 590.3 304.3 592.2Q303.7 594.0 303.1 595.8Q302.4 597.7 304.4 598.7Q306.4 599.7 308.2 601.0Q310.1 602.4 311.7 604.0Q313.4 605.7 315.0 607.7Q316.5 609.7 317.8 612.1Q319.2 614.4 318.5 615.9Q317.8 617.4 317.0 618.8Q316.3 620.2 313.6 620.6Q310.9 620.9 308.3 620.8Q305.8 620.8 303.5 620.4Q301.1 620.1 298.9 619.4Q296.8 618.7 294.8 617.7Q292.8 616.7 291.7 618.3Q290.6 619.9 289.5 621.5Q288.4 623.1 290.0 624.6Q291.6 626.1 293.0 627.9Q294.3 629.7 295.5 631.8Q296.6 633.9 297.5 636.2Q298.4 638.6 299.1 641.2Q299.7 643.9 298.6 645.1Q297.5 646.3 296.4 647.4Q295.3 648.6 292.6 648.1Q289.9 647.7 287.5 646.9Q285.1 646.2 282.9 645.2Q280.8 644.2 278.9 642.9Q277.0 641.6 275.4 640.1Q273.8 638.6 272.3 639.8Q270.8 641.1 269.2 642.3Q267.7 643.5 268.8 645.4Q269.9 647.3 270.8 649.4Q271.6 651.5 272.1 653.8Q272.6 656.2 272.8 658.7Q273.0 661.2 272.9 663.9Q272.7 666.6 271.3 667.5Q269.9 668.3 268.5 669.1Q267.1 669.9 264.7 668.7Q262.2 667.5 260.1 666.1Q258.0 664.7 256.3 663.1Q254.5 661.6 253.0 659.8Q251.6 658.1 250.4 656.2Q249.3 654.3 247.5 655.0Q245.7 655.8 243.9 656.5Q242.1 657.2 242.7 659.3Q243.2 661.5 243.4 663.8Q243.6 666.0 243.4 668.4Q243.2 670.8 242.7 673.3Q242.2 675.7 241.3 678.3Q240.4 680.8 238.8 681.3Q237.3 681.7 235.7 682.0Q234.1 682.4 232.1 680.6Q230.1 678.8 228.5 676.8Q226.9 674.9 225.6 672.9Q224.3 670.9 223.4 668.8Q222.5 666.7 222.0 664.5Q221.4 662.4 219.5 662.6Q217.6 662.9 215.6 663.0Q213.7 663.2 213.6 665.4Q213.5 667.6 213.1 669.8Q212.6 672.1 211.8 674.3Q211.0 676.5 209.8 678.8Q208.6 681.0 207.0 683.2Q205.4 685.4 203.8 685.3Q202.2 685.3 200.5 685.2Q198.9 685.1 197.5 682.8Q196.1 680.5 195.1 678.2Q194.1 675.9 193.4 673.6Q192.8 671.3 192.5 669.0Q192.2 666.8 192.3 664.5Q192.4 662.3 190.5 662.0Q188.6 661.7 186.7 661.3Q184.8 660.9 184.1 663.0Q183.4 665.1 182.3 667.1Q181.2 669.1 179.8 671.0Q178.4 673.0 176.6 674.8Q174.8 676.6 172.7 678.2Q170.5 679.9 169.0 679.4Q167.5 678.9 165.9 678.4Q164.4 677.8 163.7 675.2Q163.0 672.6 162.7 670.1Q162.4 667.6 162.4 665.2Q162.4 662.8 162.8 660.5Q163.2 658.3 163.9 656.2Q164.6 654.1 162.8 653.3Q161.1 652.4 159.4 651.5Q157.6 650.6 156.4 652.4Q155.1 654.2 153.5 655.9Q151.9 657.5 150.0 658.9Q148.1 660.3 145.9 661.6Q143.7 662.8 141.2 663.8Q138.6 664.8 137.3 663.9Q136.0 663.0 134.6 662.0Q133.3 661.1 133.4 658.4Q133.5 655.6 133.9 653.2Q134.3 650.7 135.0 648.4Q135.7 646.1 136.6 644.0Q137.6 642.0 138.9 640.2Q140.2 638.4 138.7 637.1Q137.3 635.8 135.9 634.4Q134.5 633.1 132.8 634.4Q131.1 635.8 129.1 636.9Q127.1 638.0 124.8 638.9Q122.6 639.7 120.2 640.3Q117.7 640.8 115.0 641.1Q112.3 641.3 111.3 640.1Q110.2 638.8 109.2 637.5Q108.2 636.2 109.1 633.7Q109.9 631.1 111.0 628.8Q112.1 626.5 113.4 624.5Q114.7 622.5 116.2 620.8Q117.7 619.2 119.5 617.8Q121.2 616.4 120.2 614.7Q119.2 613.1 118.2 611.4Q117.3 609.7 115.2 610.5Q113.2 611.4 110.9 611.9Q108.7 612.4 106.4 612.6Q104.0 612.7 101.5 612.6Q98.9 612.4 96.3 611.9Q93.6 611.4 93.0 609.9Q92.3 608.4 91.7 606.9Q91.2 605.4 92.7 603.1Q94.2 600.9 95.9 599.0Q97.6 597.1 99.4 595.6Q101.2 594.0 103.2 592.8Q105.1 591.6 107.1 590.8Q109.2 590.0 108.7 588.1Z"/>
<path class="g" d="M695.8 262.7Q697.9 262.2 700.0 261.8Q702.2 261.4 702.0 259.2Q701.8 257.0 702.0 254.7Q702.2 252.4 702.8 250.1Q703.3 247.8 704.3 245.5Q705.3 243.2 706.7 240.8Q708.2 238.5 709.6 238.4Q711.0 238.3 712.4 238.3Q713.8 238.2 715.5 240.4Q717.1 242.6 718.3 244.8Q719.5 247.1 720.3 249.3Q721.1 251.5 721.5 253.7Q721.9 256.0 722.0 258.2Q722.0 260.4 724.2 260.6Q726.4 260.8 728.5 261.1Q730.6 261.4 731.2 259.3Q731.8 257.1 732.7 255.1Q733.6 253.0 734.9 251.0Q736.1 249.0 737.8 247.1Q739.5 245.2 741.6 243.5Q743.7 241.7 745.1 242.1Q746.5 242.5 747.8 242.9Q749.2 243.3 750.0 245.9Q750.9 248.5 751.3 251.0Q751.7 253.5 751.8 255.9Q751.8 258.2 751.4 260.5Q751.1 262.7 750.4 264.8Q749.7 266.9 751.7 267.8Q753.7 268.7 755.6 269.7Q757.6 270.7 758.8 268.8Q760.0 267.0 761.5 265.3Q763.1 263.7 764.9 262.2Q766.8 260.7 769.0 259.5Q771.2 258.3 773.8 257.3Q776.3 256.3 777.5 257.1Q778.7 257.9 779.8 258.8Q781.0 259.6 780.9 262.3Q780.9 265.1 780.5 267.6Q780.1 270.1 779.3 272.3Q778.6 274.6 777.5 276.6Q776.5 278.6 775.2 280.3Q773.8 282.1 775.4 283.6Q777.0 285.1 778.5 286.6Q780.0 288.2 781.8 286.8Q783.5 285.5 785.5 284.4Q787.5 283.3 789.7 282.6Q792.0 281.8 794.5 281.3Q796.9 280.9 799.7 280.8Q802.4 280.7 803.3 281.9Q804.1 283.0 804.9 284.2Q805.8 285.3 804.8 287.9Q803.9 290.5 802.7 292.7Q801.5 294.9 800.1 296.8Q798.6 298.7 797.0 300.2Q795.3 301.8 793.5 303.0Q791.7 304.3 792.7 306.2Q793.7 308.1 794.6 310.1Q795.6 312.1 797.7 311.3Q799.7 310.6 802.0 310.3Q804.2 309.9 806.6 309.9Q808.9 309.9 811.4 310.3Q814.0 310.6 816.6 311.4Q819.2 312.3 819.6 313.6Q820.1 315.0 820.5 316.3Q820.8 317.7 819.1 319.8Q817.4 322.0 815.6 323.7Q813.7 325.4 811.7 326.7Q809.8 328.0 807.7 329.0Q805.6 329.9 803.5 330.5Q801.4 331.1 801.7 333.2Q802.1 335.4 802.3 337.5Q802.5 339.7 804.7 339.7Q806.9 339.7 809.2 340.1Q811.4 340.4 813.6 341.2Q815.9 341.9 818.1 343.1Q820.4 344.3 822.6 345.9Q824.8 347.5 824.8 348.9Q824.7 350.4 824.7 351.8Q824.6 353.2 822.3 354.7Q820.0 356.1 817.7 357.2Q815.3 358.2 813.0 358.8Q810.8 359.4 808.5 359.6Q806.2 359.8 804.0 359.7Q801.8 359.5 801.5 361.7Q801.1 363.8 800.6 365.9Q800.1 368.0 802.2 368.8Q804.3 369.5 806.3 370.6Q808.3 371.7 810.2 373.1Q812.0 374.5 813.8 376.4Q815.5 378.2 817.1 380.5Q818.6 382.7 818.2 384.0Q817.7 385.4 817.1 386.7Q816.6 388.0 814.0 388.7Q811.3 389.3 808.8 389.5Q806.2 389.7 803.9 389.5Q801.5 389.4 799.3 388.8Q797.1 388.3 795.1 387.5Q793.0 386.6 792.0 388.5Q790.9 390.4 789.8 392.3Q788.7 394.1 790.4 395.5Q792.1 396.8 793.7 398.5Q795.2 400.2 796.5 402.1Q797.8 404.1 798.9 406.4Q799.9 408.7 800.7 411.4Q801.4 414.0 800.5 415.1Q799.6 416.2 798.7 417.3Q797.8 418.4 795.0 418.1Q792.3 417.8 789.9 417.2Q787.4 416.6 785.2 415.6Q783.1 414.7 781.1 413.5Q779.2 412.3 777.6 410.8Q775.9 409.4 774.3 410.8Q772.7 412.3 771.0 413.7Q769.3 415.0 770.5 416.9Q771.7 418.7 772.6 420.8Q773.6 422.9 774.2 425.2Q774.7 427.5 775.0 430.0Q775.2 432.5 775.1 435.2Q774.9 438.0 773.7 438.7Q772.5 439.5 771.3 440.2Q770.1 440.9 767.6 439.8Q765.1 438.7 763.0 437.3Q760.9 435.9 759.1 434.3Q757.4 432.7 755.9 430.9Q754.5 429.2 753.4 427.3Q752.3 425.3 750.3 426.2Q748.3 427.0 746.3 427.8Q744.3 428.5 744.8 430.7Q745.3 432.8 745.5 435.1Q745.7 437.3 745.5 439.7Q745.4 442.1 744.8 444.5Q744.2 447.0 743.2 449.5Q742.1 452.1 740.7 452.4Q739.4 452.7 738.0 453.0Q736.6 453.3 734.6 451.4Q732.6 449.5 731.1 447.5Q729.5 445.5 728.3 443.4Q727.2 441.4 726.4 439.2Q725.7 437.1 725.3 434.9Q724.9 432.8 722.7 432.9Q720.5 433.1 718.4 433.1Q716.2 433.2 716.0 435.4Q715.8 437.6 715.2 439.8Q714.7 442.0 713.8 444.2Q712.8 446.3 711.5 448.5Q710.1 450.6 708.3 452.7Q706.5 454.8 705.1 454.6Q703.7 454.5 702.3 454.3Q700.9 454.1 699.6 451.7Q698.3 449.2 697.5 446.8Q696.7 444.5 696.3 442.1Q695.9 439.8 695.8 437.5Q695.8 435.3 696.1 433.1Q696.4 430.9 694.3 430.3Q692.2 429.8 690.2 429.1Q688.1 428.5 687.2 430.5Q686.3 432.5 685.1 434.4Q683.8 436.3 682.2 438.1Q680.6 439.8 678.7 441.4Q676.7 443.0 674.3 444.4Q672.0 445.7 670.7 445.1Q669.4 444.5 668.1 443.9Q666.8 443.3 666.4 440.6Q666.0 437.9 666.0 435.3Q666.0 432.8 666.4 430.4Q666.8 428.1 667.5 426.0Q668.2 423.8 669.2 421.8Q670.2 419.9 668.4 418.7Q666.6 417.5 664.8 416.2Q663.1 414.9 661.6 416.5Q660.1 418.1 658.3 419.5Q656.5 420.9 654.4 422.0Q652.3 423.2 650.0 424.0Q647.6 424.9 644.9 425.4Q642.2 426.0 641.2 425.0Q640.2 424.0 639.2 423.0Q638.2 422.0 638.7 419.3Q639.1 416.6 640.0 414.2Q640.8 411.8 641.9 409.7Q643.0 407.6 644.4 405.8Q645.7 404.0 647.3 402.5Q648.9 400.9 647.6 399.2Q646.3 397.5 645.1 395.7Q643.8 393.9 641.9 395.0Q639.9 396.0 637.8 396.7Q635.6 397.5 633.3 397.9Q631.0 398.3 628.4 398.3Q625.9 398.4 623.2 398.0Q620.5 397.6 619.8 396.3Q619.2 395.1 618.6 393.8Q618.0 392.5 619.3 390.1Q620.6 387.7 622.2 385.7Q623.7 383.8 625.5 382.1Q627.2 380.5 629.1 379.2Q630.9 378.0 633.0 377.0Q635.0 376.1 634.3 374.1Q633.6 372.0 633.0 369.9Q632.4 367.8 630.2 368.2Q628.1 368.5 625.8 368.5Q623.5 368.5 621.2 368.2Q618.9 367.8 616.4 367.0Q614.0 366.2 611.6 365.0Q609.1 363.7 608.9 362.3Q608.7 360.9 608.6 359.5Q608.4 358.1 610.4 356.3Q612.5 354.5 614.6 353.1Q616.7 351.7 618.9 350.7Q621.0 349.7 623.2 349.2Q625.4 348.6 627.6 348.3Q629.8 348.1 629.8 345.9Q629.8 343.8 630.0 341.6Q630.1 339.4 627.9 339.1Q625.8 338.7 623.6 338.0Q621.5 337.2 619.4 336.1Q617.3 335.0 615.3 333.5Q613.3 331.9 611.3 330.0Q609.4 328.0 609.7 326.6Q609.9 325.2 610.2 323.8Q610.5 322.5 613.1 321.4Q615.6 320.3 618.0 319.7Q620.5 319.1 622.9 318.9Q625.2 318.7 627.5 318.8Q629.7 319.0 631.9 319.5Q634.0 320.0 634.8 317.9Q635.5 315.9 636.3 313.9Q637.1 311.9 635.2 310.8Q633.3 309.7 631.5 308.3Q629.7 306.9 628.1 305.2Q626.5 303.5 625.0 301.4Q623.6 299.3 622.4 296.8Q621.3 294.3 622.0 293.1Q622.7 291.9 623.4 290.6Q624.1 289.4 626.9 289.2Q629.6 289.1 632.1 289.3Q634.7 289.5 637.0 290.0Q639.3 290.6 641.3 291.5Q643.4 292.4 645.3 293.5Q647.2 294.7 648.5 293.0Q649.9 291.3 651.3 289.7Q652.7 288.0 651.2 286.4Q649.8 284.8 648.5 282.9Q647.3 281.0 646.3 278.8Q645.4 276.6 644.7 274.2Q644.0 271.8 643.7 269.0Q643.4 266.3 644.5 265.4Q645.6 264.4 646.6 263.5Q647.7 262.6 650.4 263.3Q653.0 264.0 655.3 265.1Q657.7 266.1 659.7 267.3Q661.7 268.6 663.3 270.1Q665.0 271.6 666.4 273.4Q667.8 275.1 669.6 273.9Q671.5 272.7 673.3 271.7Q675.2 270.6 674.4 268.5Q673.5 266.5 672.9 264.3Q672.4 262.1 672.2 259.8Q671.9 257.4 672.1 254.9Q672.3 252.4 672.9 249.7Q673.5 247.0 674.8 246.5Q676.1 245.9 677.4 245.4Q678.8 244.9 681.0 246.4Q683.3 248.0 685.2 249.7Q687.0 251.4 688.5 253.3Q690.0 255.1 691.1 257.1Q692.2 259.1 692.9 261.1Q693.7 263.2 695.8 262.7Z"/>
<path class="g" d="M466.5 892.5Q464.4 892.9 462.2 893.2Q460.1 893.5 460.1 895.7Q460.2 897.9 459.9 900.1Q459.6 902.4 458.9 904.6Q458.2 906.9 457.1 909.2Q456.0 911.5 454.4 913.7Q452.9 916.0 451.5 916.0Q450.0 916.0 448.6 916.0Q447.2 915.9 445.7 913.7Q444.1 911.4 443.0 909.1Q442.0 906.8 441.3 904.6Q440.6 902.3 440.3 900.0Q440.1 897.8 440.1 895.6Q440.2 893.4 438.1 893.1Q435.9 892.7 433.8 892.3Q431.7 891.9 431.0 894.0Q430.3 896.1 429.3 898.1Q428.3 900.2 426.9 902.1Q425.5 904.0 423.7 905.8Q421.9 907.6 419.7 909.2Q417.5 910.8 416.2 910.4Q414.8 909.9 413.5 909.4Q412.2 909.0 411.5 906.3Q410.7 903.7 410.5 901.2Q410.2 898.6 410.3 896.3Q410.4 893.9 410.9 891.7Q411.3 889.5 412.1 887.4Q412.9 885.3 411.0 884.4Q409.0 883.4 407.2 882.3Q405.3 881.2 404.0 883.0Q402.7 884.7 401.0 886.3Q399.4 887.9 397.5 889.2Q395.5 890.6 393.3 891.7Q391.0 892.8 388.4 893.7Q385.8 894.5 384.6 893.6Q383.5 892.8 382.4 891.9Q381.3 891.0 381.5 888.3Q381.7 885.5 382.2 883.0Q382.8 880.6 383.6 878.4Q384.5 876.2 385.7 874.2Q386.8 872.3 388.2 870.6Q389.7 868.9 388.2 867.3Q386.7 865.8 385.2 864.1Q383.8 862.5 382.0 863.7Q380.2 865.0 378.1 865.9Q376.1 866.9 373.8 867.6Q371.5 868.2 369.0 868.5Q366.5 868.9 363.8 868.8Q361.0 868.7 360.2 867.6Q359.5 866.4 358.7 865.2Q357.9 864.0 359.0 861.4Q360.1 858.9 361.4 856.8Q362.7 854.6 364.3 852.8Q365.8 851.0 367.5 849.5Q369.2 848.1 371.1 846.9Q373.0 845.8 372.1 843.8Q371.2 841.8 370.4 839.8Q369.6 837.8 367.5 838.4Q365.3 839.0 363.1 839.2Q360.8 839.5 358.5 839.4Q356.1 839.3 353.6 838.8Q351.1 838.2 348.6 837.3Q346.0 836.3 345.6 835.0Q345.3 833.6 345.0 832.2Q344.6 830.8 346.5 828.8Q348.3 826.7 350.2 825.1Q352.2 823.5 354.2 822.3Q356.3 821.1 358.4 820.3Q360.5 819.4 362.6 819.0Q364.8 818.5 364.6 816.3Q364.4 814.2 364.2 812.0Q364.1 809.9 361.9 809.7Q359.7 809.6 357.5 809.1Q355.3 808.6 353.1 807.7Q350.9 806.9 348.7 805.6Q346.5 804.3 344.4 802.5Q342.3 800.8 342.4 799.4Q342.5 798.0 342.7 796.6Q342.8 795.1 345.2 793.8Q347.6 792.5 350.0 791.6Q352.3 790.7 354.6 790.2Q357.0 789.7 359.2 789.6Q361.5 789.5 363.7 789.8Q365.9 790.1 366.4 787.9Q366.9 785.8 367.5 783.7Q368.1 781.7 366.0 780.8Q364.0 780.0 362.0 778.8Q360.1 777.6 358.3 776.1Q356.5 774.5 354.9 772.6Q353.2 770.7 351.8 768.3Q350.3 766.0 350.9 764.7Q351.5 763.4 352.1 762.1Q352.7 760.8 355.4 760.3Q358.1 759.8 360.6 759.8Q363.1 759.7 365.5 760.0Q367.8 760.3 370.0 760.9Q372.2 761.6 374.1 762.5Q376.1 763.5 377.3 761.6Q378.4 759.8 379.7 758.0Q380.9 756.3 379.3 754.8Q377.6 753.3 376.2 751.6Q374.7 749.8 373.5 747.8Q372.3 745.8 371.4 743.4Q370.5 741.0 369.9 738.4Q369.3 735.7 370.2 734.7Q371.2 733.6 372.1 732.6Q373.1 731.5 375.8 732.0Q378.5 732.4 381.0 733.1Q383.4 733.9 385.5 734.9Q387.6 736.0 389.5 737.3Q391.3 738.6 392.9 740.1Q394.5 741.7 396.1 740.3Q397.8 739.0 399.6 737.7Q401.3 736.4 400.2 734.5Q399.1 732.6 398.3 730.5Q397.5 728.3 397.1 726.0Q396.6 723.7 396.5 721.2Q396.4 718.6 396.7 715.9Q397.0 713.2 398.2 712.5Q399.5 711.8 400.7 711.2Q402.0 710.5 404.4 711.8Q406.8 713.0 408.9 714.5Q410.9 716.0 412.6 717.7Q414.3 719.4 415.6 721.2Q416.9 723.1 417.9 725.1Q418.9 727.0 420.9 726.3Q422.9 725.5 425.0 724.9Q427.1 724.3 426.7 722.1Q426.3 719.9 426.2 717.7Q426.1 715.4 426.4 713.0Q426.7 710.7 427.5 708.3Q428.2 705.8 429.3 703.4Q430.5 700.9 431.9 700.6Q433.3 700.4 434.7 700.2Q436.1 700.0 438.0 702.0Q439.9 704.0 441.3 706.0Q442.8 708.1 443.8 710.2Q444.8 712.4 445.5 714.5Q446.1 716.7 446.4 718.9Q446.7 721.1 448.9 721.0Q451.1 721.0 453.2 721.1Q455.4 721.1 455.7 718.9Q456.0 716.8 456.7 714.6Q457.4 712.4 458.4 710.3Q459.5 708.2 460.9 706.1Q462.4 704.1 464.3 702.1Q466.2 700.1 467.6 700.4Q469.0 700.6 470.4 700.8Q471.8 701.1 472.9 703.6Q474.1 706.1 474.8 708.5Q475.5 711.0 475.7 713.3Q476.0 715.7 475.9 717.9Q475.9 720.2 475.4 722.3Q475.0 724.5 477.0 725.2Q479.1 725.8 481.1 726.6Q483.2 727.4 484.2 725.4Q485.2 723.4 486.5 721.6Q487.9 719.8 489.5 718.1Q491.2 716.5 493.3 715.0Q495.3 713.5 497.8 712.3Q500.2 711.0 501.5 711.7Q502.7 712.3 504.0 713.0Q505.2 713.7 505.5 716.5Q505.7 719.2 505.6 721.7Q505.5 724.3 505.0 726.6Q504.5 728.9 503.7 731.0Q502.8 733.1 501.7 735.0Q500.6 736.9 502.3 738.2Q504.1 739.5 505.8 740.9Q507.4 742.3 509.0 740.8Q510.6 739.2 512.5 737.9Q514.3 736.6 516.5 735.6Q518.6 734.6 521.0 733.9Q523.4 733.1 526.2 732.7Q528.9 732.4 529.8 733.4Q530.8 734.4 531.8 735.5Q532.7 736.6 532.1 739.2Q531.4 741.9 530.5 744.2Q529.5 746.6 528.3 748.6Q527.1 750.6 525.6 752.4Q524.2 754.1 522.5 755.5Q520.8 757.0 522.0 758.8Q523.3 760.6 524.4 762.4Q525.5 764.3 527.5 763.3Q529.5 762.4 531.7 761.8Q533.9 761.2 536.2 760.9Q538.6 760.6 541.1 760.7Q543.6 760.8 546.3 761.3Q549.0 761.8 549.6 763.1Q550.2 764.4 550.7 765.7Q551.3 767.1 549.8 769.4Q548.3 771.7 546.7 773.6Q545.0 775.5 543.2 777.0Q541.4 778.6 539.5 779.7Q537.5 780.9 535.5 781.7Q533.4 782.5 534.0 784.6Q534.6 786.7 535.0 788.8Q535.5 790.9 537.7 790.7Q539.9 790.5 542.2 790.6Q544.4 790.7 546.7 791.2Q549.0 791.7 551.4 792.6Q553.8 793.6 556.1 794.9Q558.5 796.3 558.6 797.7Q558.8 799.1 558.9 800.5Q559.0 801.9 556.8 803.7Q554.7 805.4 552.5 806.6Q550.3 807.9 548.1 808.8Q545.9 809.6 543.7 810.1Q541.4 810.6 539.2 810.7Q537.0 810.8 536.9 812.9Q536.8 815.1 536.5 817.2Q536.3 819.4 538.4 819.9Q540.6 820.4 542.7 821.2Q544.8 822.1 546.8 823.3Q548.8 824.5 550.8 826.2Q552.7 827.8 554.5 829.9Q556.3 831.9 556.0 833.3Q555.6 834.7 555.3 836.1Q554.9 837.4 552.3 838.4Q549.7 839.3 547.2 839.8Q544.8 840.3 542.4 840.3Q540.0 840.4 537.8 840.2Q535.5 839.9 533.4 839.3Q531.3 838.7 530.5 840.7Q529.6 842.7 528.7 844.6Q527.8 846.6 529.6 847.7Q531.5 848.9 533.2 850.4Q534.9 851.9 536.5 853.7Q538.0 855.5 539.3 857.7Q540.6 859.9 541.6 862.4Q542.7 864.9 541.9 866.1Q541.1 867.3 540.3 868.5Q539.5 869.7 536.8 869.7Q534.0 869.7 531.5 869.4Q529.0 869.1 526.8 868.4Q524.5 867.7 522.5 866.7Q520.4 865.7 518.6 864.4Q516.8 863.2 515.4 864.8Q513.9 866.4 512.4 868.0Q510.9 869.5 512.3 871.2Q513.7 872.9 514.8 874.9Q516.0 876.9 516.8 879.1Q517.7 881.3 518.2 883.8Q518.7 886.2 518.9 889.0Q519.0 891.7 517.9 892.6Q516.8 893.5 515.7 894.3Q514.5 895.2 511.9 894.3Q509.3 893.5 507.1 892.3Q504.8 891.2 502.9 889.8Q500.9 888.4 499.3 886.8Q497.7 885.2 496.4 883.4Q495.1 881.6 493.3 882.7Q491.4 883.8 489.4 884.8Q487.5 885.7 488.3 887.8Q489.0 889.9 489.5 892.1Q489.9 894.3 490.0 896.7Q490.1 899.1 489.8 901.6Q489.4 904.1 488.7 906.7Q488.0 909.4 486.6 909.8Q485.3 910.3 483.9 910.7Q482.6 911.2 480.4 909.5Q478.2 907.9 476.5 906.1Q474.7 904.2 473.3 902.3Q471.9 900.4 470.9 898.3Q469.9 896.3 469.3 894.2Q468.7 892.1 466.5 892.5Z"/>
<path class="g" d="M173.6 260.6Q175.8 260.4 178.0 260.2Q180.1 260.0 180.2 257.8Q180.3 255.6 180.7 253.4Q181.1 251.2 182.0 248.9Q182.8 246.7 184.0 244.5Q185.2 242.3 186.9 240.1Q188.6 238.0 190.0 238.0Q191.4 238.1 192.8 238.2Q194.3 238.3 195.7 240.7Q197.1 243.0 198.0 245.4Q199.0 247.7 199.5 250.0Q200.0 252.3 200.2 254.6Q200.4 256.8 200.2 259.0Q200.0 261.2 202.1 261.7Q204.2 262.1 206.3 262.6Q208.4 263.2 209.2 261.1Q210.0 259.1 211.1 257.1Q212.3 255.1 213.7 253.3Q215.2 251.5 217.1 249.8Q219.0 248.1 221.3 246.6Q223.6 245.1 224.9 245.6Q226.2 246.1 227.5 246.7Q228.8 247.2 229.4 249.9Q230.0 252.6 230.1 255.1Q230.2 257.7 230.0 260.0Q229.8 262.4 229.2 264.6Q228.6 266.7 227.7 268.8Q226.8 270.8 228.7 271.9Q230.5 273.0 232.3 274.2Q234.2 275.4 235.6 273.7Q237.0 272.0 238.7 270.5Q240.4 269.0 242.4 267.7Q244.4 266.5 246.8 265.5Q249.1 264.5 251.7 263.8Q254.4 263.2 255.5 264.1Q256.5 265.0 257.6 266.0Q258.7 266.9 258.3 269.6Q258.0 272.4 257.3 274.8Q256.6 277.2 255.6 279.4Q254.6 281.5 253.4 283.4Q252.1 285.3 250.6 286.9Q249.1 288.5 250.5 290.2Q251.9 291.8 253.2 293.5Q254.6 295.2 256.4 294.1Q258.3 292.9 260.4 292.1Q262.5 291.2 264.8 290.7Q267.1 290.2 269.7 290.0Q272.2 289.8 274.9 290.0Q277.6 290.3 278.4 291.5Q279.1 292.7 279.8 294.0Q280.5 295.2 279.3 297.7Q278.0 300.1 276.6 302.2Q275.2 304.3 273.5 306.0Q271.9 307.7 270.1 309.1Q268.3 310.4 266.3 311.5Q264.4 312.5 265.2 314.5Q266.0 316.6 266.7 318.6Q267.4 320.7 269.5 320.2Q271.7 319.7 274.0 319.6Q276.2 319.5 278.6 319.7Q280.9 320.0 283.4 320.6Q285.8 321.3 288.3 322.4Q290.8 323.5 291.1 324.8Q291.4 326.2 291.7 327.6Q291.9 329.0 290.0 331.0Q288.0 332.9 286.0 334.4Q283.9 335.9 281.8 337.0Q279.7 338.1 277.6 338.8Q275.4 339.5 273.3 339.9Q271.1 340.2 271.2 342.4Q271.3 344.5 271.3 346.7Q271.3 348.9 273.5 349.1Q275.7 349.4 277.8 350.0Q280.0 350.6 282.2 351.6Q284.3 352.6 286.4 354.0Q288.5 355.4 290.5 357.3Q292.6 359.1 292.4 360.5Q292.2 361.9 292.0 363.3Q291.7 364.7 289.3 366.0Q286.8 367.2 284.4 367.9Q282.0 368.7 279.6 369.0Q277.3 369.4 275.0 369.3Q272.8 369.3 270.6 368.9Q268.4 368.5 267.8 370.6Q267.2 372.7 266.5 374.8Q265.8 376.8 267.8 377.8Q269.8 378.7 271.6 380.0Q273.5 381.3 275.2 382.9Q276.9 384.6 278.4 386.6Q280.0 388.6 281.3 391.0Q282.6 393.4 281.9 394.7Q281.3 396.0 280.7 397.2Q280.0 398.5 277.3 398.8Q274.5 399.2 272.0 399.1Q269.5 399.0 267.2 398.6Q264.8 398.2 262.7 397.4Q260.6 396.6 258.6 395.6Q256.7 394.5 255.4 396.3Q254.2 398.0 252.9 399.8Q251.5 401.5 253.1 403.0Q254.7 404.6 256.0 406.4Q257.3 408.2 258.4 410.3Q259.5 412.4 260.3 414.8Q261.1 417.2 261.6 419.9Q262.0 422.6 261.0 423.6Q260.0 424.6 259.0 425.6Q257.9 426.6 255.2 426.0Q252.6 425.4 250.2 424.5Q247.8 423.7 245.7 422.5Q243.7 421.3 241.9 419.9Q240.1 418.5 238.7 416.9Q237.2 415.2 235.4 416.5Q233.7 417.8 231.8 419.0Q230.0 420.1 231.0 422.1Q232.0 424.1 232.7 426.2Q233.3 428.4 233.7 430.8Q234.0 433.1 234.0 435.6Q234.0 438.2 233.5 440.9Q233.1 443.6 231.8 444.2Q230.5 444.8 229.2 445.4Q227.9 446.0 225.6 444.6Q223.2 443.2 221.3 441.5Q219.3 439.9 217.7 438.2Q216.2 436.4 214.9 434.5Q213.7 432.6 212.9 430.5Q212.0 428.5 209.9 429.1Q207.8 429.8 205.7 430.3Q203.6 430.8 203.9 433.0Q204.2 435.2 204.2 437.5Q204.1 439.7 203.7 442.1Q203.2 444.4 202.4 446.8Q201.5 449.2 200.2 451.6Q198.9 454.0 197.5 454.1Q196.1 454.3 194.7 454.4Q193.3 454.6 191.5 452.5Q189.7 450.4 188.4 448.2Q187.1 446.1 186.2 443.9Q185.2 441.7 184.7 439.5Q184.2 437.3 184.0 435.1Q183.9 432.9 181.7 432.8Q179.5 432.7 177.4 432.6Q175.2 432.4 174.8 434.5Q174.3 436.7 173.5 438.8Q172.7 440.9 171.6 443.0Q170.4 445.1 168.8 447.0Q167.2 449.0 165.2 450.9Q163.2 452.7 161.8 452.4Q160.4 452.1 159.1 451.8Q157.7 451.5 156.7 448.9Q155.7 446.3 155.1 443.9Q154.6 441.4 154.4 439.0Q154.3 436.7 154.5 434.4Q154.7 432.2 155.3 430.0Q155.8 427.9 153.8 427.1Q151.8 426.3 149.8 425.5Q147.8 424.6 146.7 426.5Q145.6 428.4 144.1 430.2Q142.7 431.9 140.9 433.5Q139.1 435.0 137.0 436.4Q134.9 437.7 132.4 438.9Q129.9 440.0 128.6 439.2Q127.4 438.5 126.2 437.7Q125.0 437.0 124.9 434.2Q124.8 431.5 125.1 429.0Q125.4 426.5 126.0 424.2Q126.6 421.9 127.6 419.8Q128.5 417.8 129.7 415.9Q130.9 414.1 129.3 412.7Q127.6 411.3 126.0 409.8Q124.4 408.3 122.7 409.8Q121.1 411.2 119.1 412.4Q117.2 413.6 115.0 414.5Q112.8 415.4 110.4 416.0Q107.9 416.6 105.2 416.8Q102.5 417.1 101.5 416.0Q100.6 414.9 99.8 413.8Q98.9 412.6 99.7 410.0Q100.4 407.4 101.5 405.1Q102.6 402.8 103.9 400.9Q105.3 398.9 106.8 397.2Q108.4 395.6 110.1 394.3Q111.9 392.9 110.8 391.1Q109.6 389.2 108.6 387.3Q107.6 385.4 105.5 386.2Q103.5 387.0 101.3 387.5Q99.1 388.0 96.7 388.2Q94.3 388.3 91.8 388.1Q89.3 387.8 86.6 387.2Q84.0 386.5 83.5 385.2Q83.0 383.8 82.5 382.5Q82.0 381.2 83.6 378.9Q85.2 376.7 87.0 374.9Q88.7 373.1 90.6 371.6Q92.5 370.2 94.5 369.2Q96.5 368.1 98.6 367.4Q100.7 366.7 100.3 364.6Q99.8 362.5 99.5 360.3Q99.1 358.2 96.9 358.3Q94.7 358.4 92.4 358.2Q90.2 357.9 87.9 357.3Q85.6 356.7 83.3 355.6Q81.0 354.6 78.7 353.1Q76.4 351.6 76.4 350.2Q76.3 348.7 76.3 347.3Q76.3 345.9 78.5 344.3Q80.8 342.7 83.0 341.6Q85.3 340.4 87.5 339.7Q89.8 339.0 92.0 338.6Q94.3 338.3 96.5 338.3Q98.7 338.3 98.9 336.2Q99.2 334.0 99.6 331.9Q99.9 329.7 97.8 329.1Q95.7 328.5 93.6 327.5Q91.6 326.6 89.6 325.2Q87.7 323.9 85.8 322.2Q84.0 320.4 82.3 318.3Q80.6 316.1 81.0 314.8Q81.4 313.4 81.9 312.0Q82.3 310.7 85.0 309.9Q87.6 309.1 90.1 308.8Q92.6 308.4 95.0 308.5Q97.3 308.5 99.6 308.9Q101.8 309.3 103.9 310.1Q106.0 310.8 106.9 308.8Q107.9 306.9 108.9 305.0Q109.9 303.1 108.1 301.8Q106.3 300.5 104.7 299.0Q103.1 297.4 101.7 295.5Q100.2 293.6 99.1 291.3Q97.9 289.1 97.0 286.5Q96.1 283.9 96.9 282.8Q97.8 281.6 98.6 280.5Q99.5 279.4 102.2 279.5Q105.0 279.6 107.4 280.1Q109.9 280.6 112.2 281.4Q114.4 282.2 116.4 283.3Q118.3 284.4 120.1 285.8Q121.8 287.1 123.3 285.6Q124.9 284.0 126.5 282.6Q128.1 281.1 126.8 279.3Q125.5 277.5 124.4 275.5Q123.4 273.5 122.7 271.2Q122.0 269.0 121.6 266.5Q121.2 264.0 121.2 261.2Q121.2 258.5 122.3 257.7Q123.5 256.9 124.7 256.1Q125.9 255.3 128.4 256.3Q131.0 257.3 133.2 258.6Q135.4 259.8 137.2 261.3Q139.1 262.8 140.6 264.5Q142.1 266.2 143.3 268.0Q144.5 269.9 146.4 268.9Q148.4 268.0 150.3 267.1Q152.3 266.2 151.7 264.1Q151.0 262.0 150.7 259.8Q150.4 257.5 150.5 255.2Q150.5 252.8 151.0 250.3Q151.4 247.8 152.3 245.2Q153.2 242.6 154.5 242.2Q155.9 241.8 157.3 241.5Q158.6 241.1 160.7 242.9Q162.8 244.6 164.5 246.6Q166.2 248.5 167.4 250.5Q168.7 252.5 169.6 254.6Q170.4 256.6 171.0 258.8Q171.5 260.9 173.6 260.6Z"/>
<circle cx="519.50" cy="259.20" r="64.80" class="c"/>
<circle cx="519.50" cy="259.20" r="50.00" class="c"/>
<circle cx="625.40" cy="680.50" r="64.80" class="c"/>
<circle cx="625.40" cy="680.50" r="50.00" class="c"/>
<circle cx="207.10" cy="561.40" r="64.80" class="c"/>
<circle cx="207.10" cy="561.40" r="50.00" class="c"/>
<circle cx="716.30" cy="346.70" r="69.80" class="c"/>
<circle cx="716.30" cy="346.70" r="29.80" class="c"/>
<circle cx="450.60" cy="807.50" r="69.80" class="c"/>
<circle cx="450.60" cy="807.50" r="29.80" class="c"/>
<circle cx="184.80" cy="346.40" r="69.80" class="c"/>
<circle cx="184.80" cy="346.40" r="29.80" class="c"/>
</svg>
<div id="txt">
<div class="t" style="top:75.80px">n in = 1000/min (Si)</div>
<div class="t" style="top:97.30px">n out = 590,9/min (H)</div>
<div class="t" style="top:118.80px">i = 1,692</div>
<div class="t" style="top:140.30px">n control = 0/min (Se)</div>
<div class="t" style="top:161.80px">T in = 477,5 Nm (Si)</div>
<div class="t" style="top:183.30px">T out = -808 Nm (H)</div>
<div class="t" style="top:226.30px">nSi = 1000/min</div>
<div class="t" style="top:247.80px">nC = 393,9/min</div>
<div class="t" style="top:269.30px">nH = 590,9/min</div>
<div class="t" style="top:290.80px">nSe = 0/min</div>
<div class="t" style="top:312.30px">nPi0 = -322,3/min</div>
<div class="t" style="top:333.80px">nPiC = -716,3/min</div>
<div class="t" style="top:355.30px">nPe0 = 1223/min</div>
<div class="t" style="top:376.80px">nPeC = 829,3/min</div>
<div class="t" style="top:419.80px">rCi = 49,78 mm</div>
<div class="t" style="top:441.30px">rCe = 60,81 mm</div>
<div class="t" style="top:462.80px">rSi = 26 mm</div>
<div class="t" style="top:484.30px">rSe = 40 mm</div>
<div class="t" style="top:505.80px">rH = -80 mm</div>
<div class="t" style="top:527.30px">rPi = 22 mm</div>
<div class="t" style="top:548.80px">rPe = 19 mm</div>
<div class="t" style="top:591.80px">zSi = 26</div>
<div class="t" style="top:613.30px">zPi = 22</div>
<div class="t" style="top:634.80px">zPe = 19</div>
<div class="t" style="top:656.30px">zH = -80</div>
<div class="t" style="top:677.80px">zSe = 40</div>
<div class="t" style="top:720.80px">vSi = 2,723 m/s</div>
<div class="t" style="top:742.30px">vCi = 2,054 m/s</div>
<div class="t" style="top:763.80px">vCe = 2,509 m/s</div>
<div class="t" style="top:785.30px">vH = 4,95 m/s</div>
<div class="t" style="top:806.80px">vSe = 0 m/s</div>
</div>
</div>
</body></html>
